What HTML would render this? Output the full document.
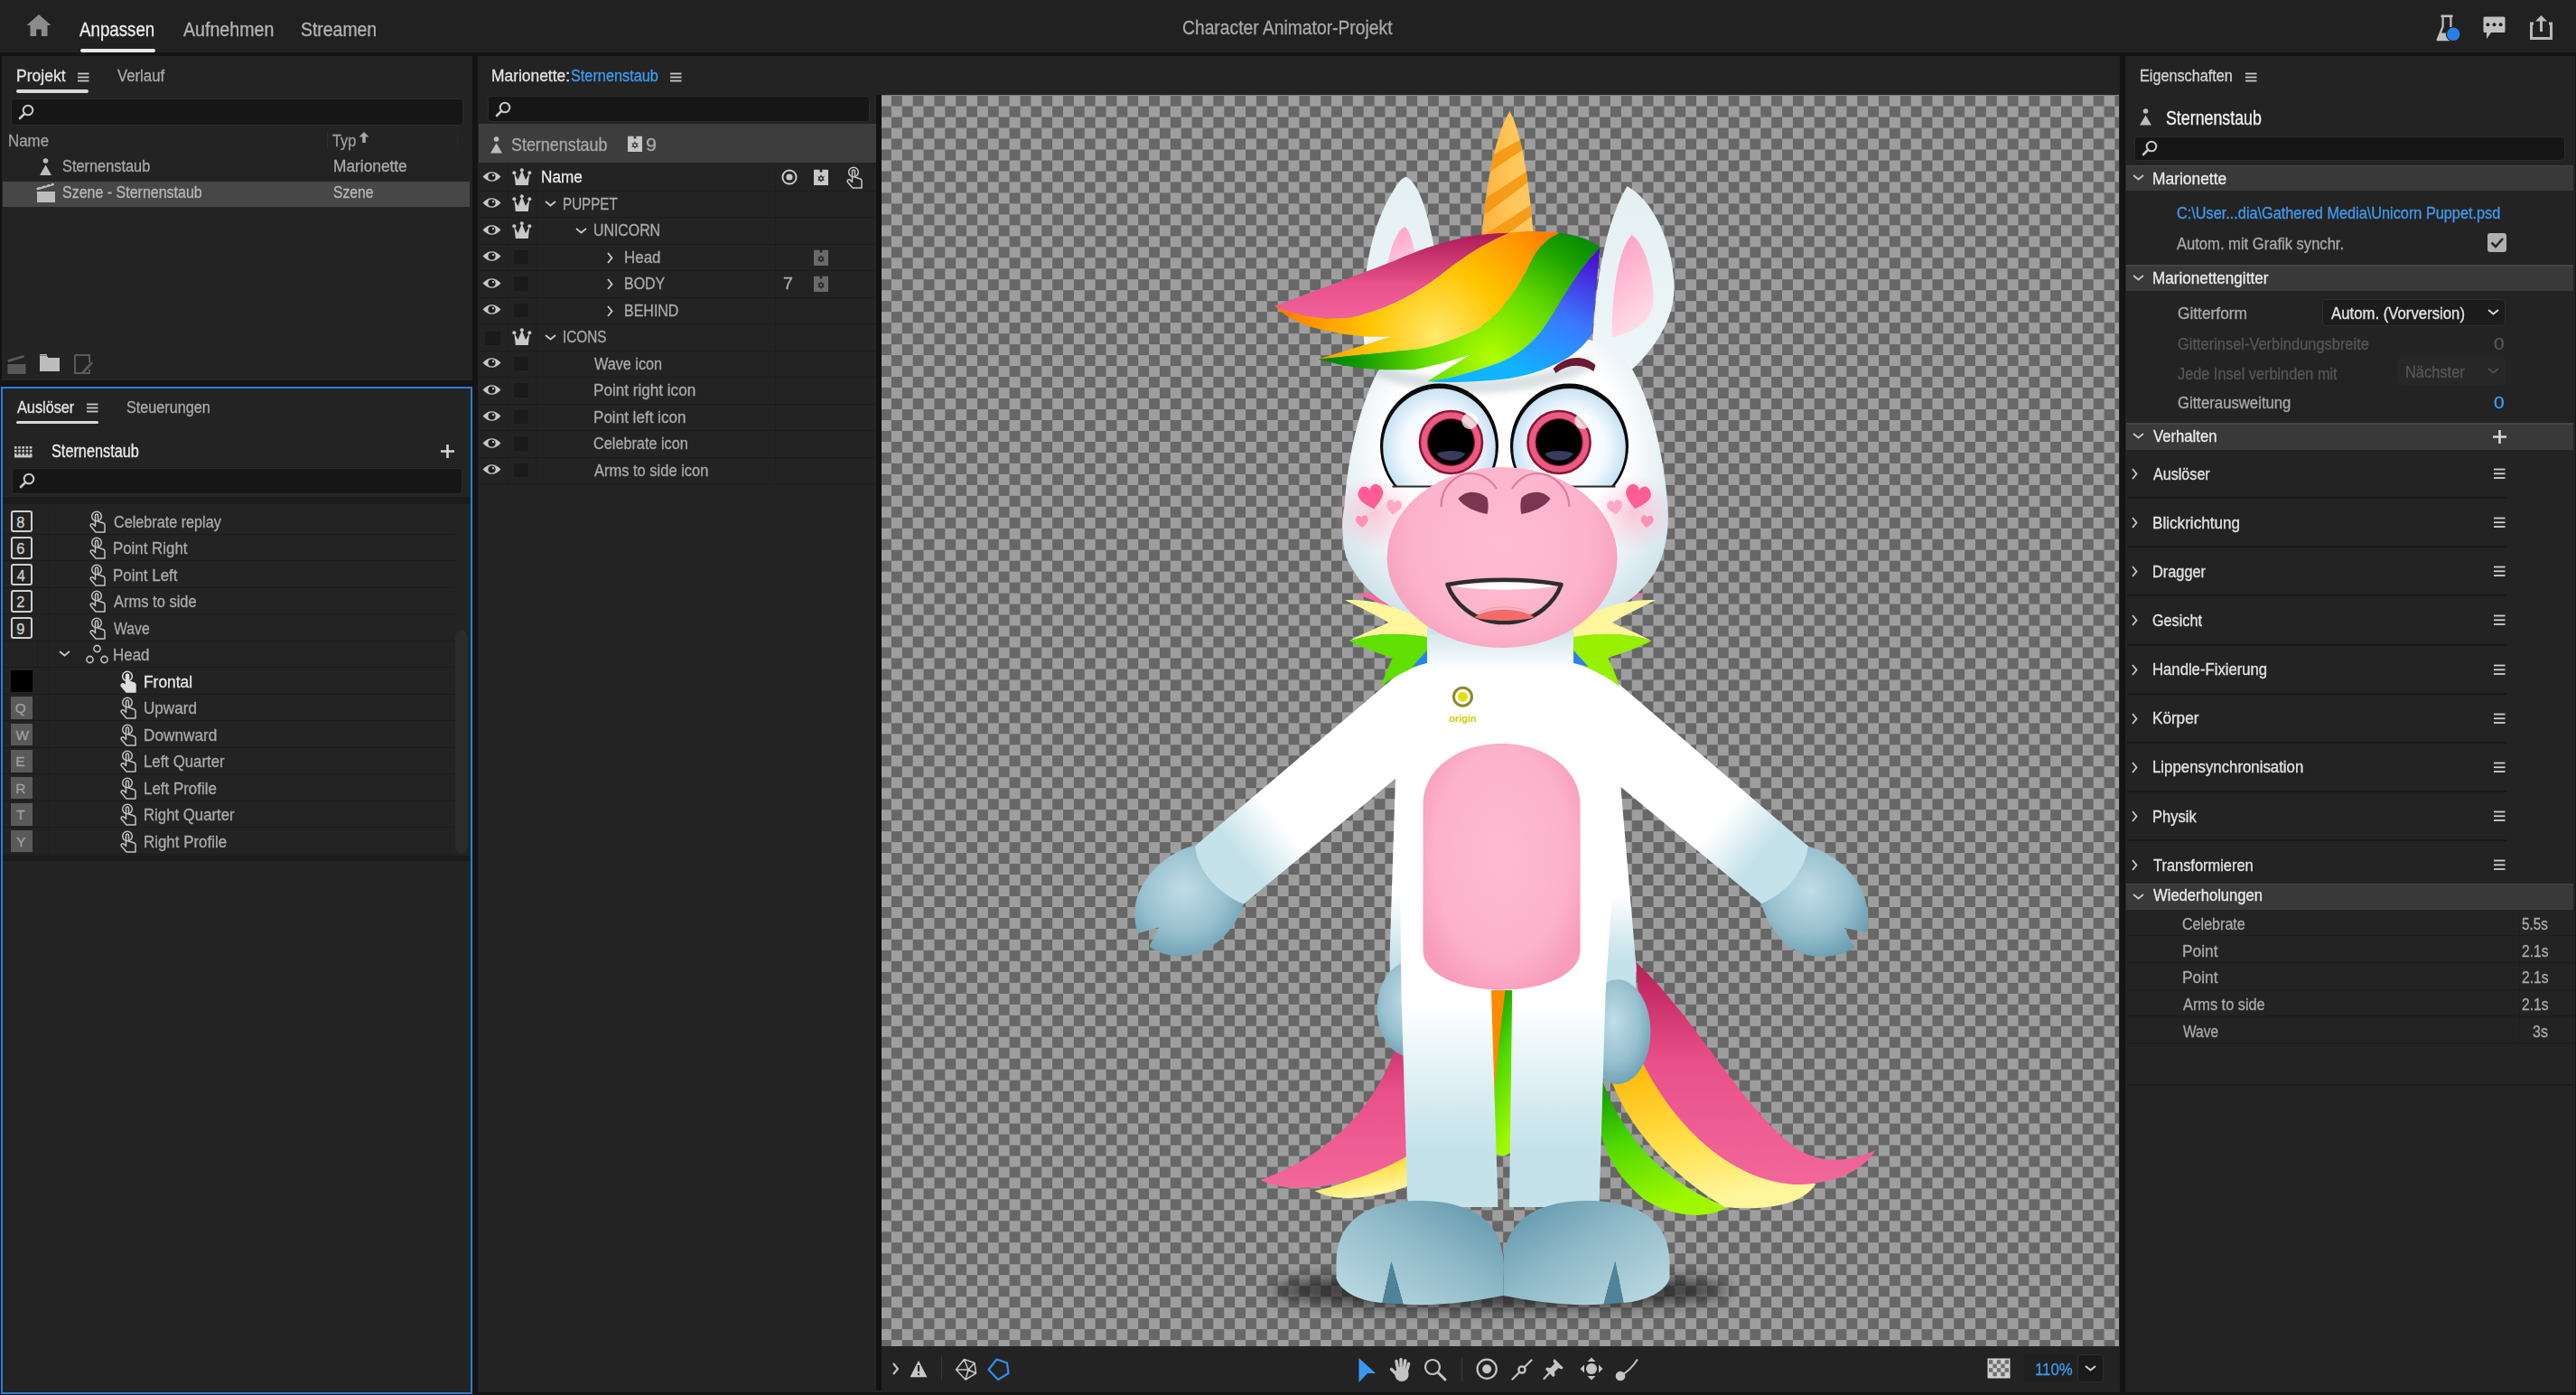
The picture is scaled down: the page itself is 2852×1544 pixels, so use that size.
<!DOCTYPE html><html><head><meta charset="utf-8"><style>html,body{margin:0;padding:0;width:2852px;height:1544px;overflow:hidden;background:#121212;}.t{position:absolute;white-space:nowrap;font-family:"Liberation Sans",sans-serif;transform-origin:0 0;-webkit-text-stroke:0.3px currentColor;}svg{overflow:visible}</style></head><body>
<div style="position:absolute;left:0.00px;top:0.00px;width:2852.00px;height:58.00px;background:#212121;"></div>
<svg style="position:absolute;left:29.00px;top:15.00px" width="28.00" height="26.00" viewBox="0 0 28 26"><path d="M14 1 L27.5 13 H23.5 V25 H16.8 V17.5 H11.2 V25 H4.5 V13 H0.5 Z" fill="#8c8c8c"/></svg>
<div class="t" style="left:87.96px;top:22.14px;font-size:21.80px;line-height:21.80px;color:#ececec;transform:scaleX(0.8585)">Anpassen</div>
<div style="position:absolute;left:89.00px;top:54.00px;width:83.00px;height:3.50px;background:#e8e8e8;border-radius:2px;"></div>
<div class="t" style="left:202.96px;top:22.14px;font-size:21.80px;line-height:21.80px;color:#b3b3b3;transform:scaleX(0.8996)">Aufnehmen</div>
<div class="t" style="left:333.12px;top:22.14px;font-size:21.80px;line-height:21.80px;color:#b3b3b3;transform:scaleX(0.8902)">Streamen</div>
<div class="t" style="left:1309.02px;top:20.20px;font-size:22.09px;line-height:22.09px;color:#a9a9a9;transform:scaleX(0.8732)">Character Animator-Projekt</div>
<svg style="position:absolute;left:2697.00px;top:16.00px" width="30.00" height="30.00" viewBox="0 0 30 30"><path d="M5.5 1.8 H18.5" stroke="#c0c0c0" stroke-width="2.6"/><path d="M7.6 2 V13.5 L1.6 28.2 H17 M16.4 2 V13.5 L18.5 19" fill="none" stroke="#c0c0c0" stroke-width="2.2" stroke-linejoin="round"/><path d="M4.6 20.5 H13.8 L15.5 28.5 H1.2 Z" fill="#c0c0c0"/><circle cx="19.2" cy="21.8" r="7.8" fill="#2680eb" stroke="#212121" stroke-width="1.2"/></svg>
<svg style="position:absolute;left:2749.00px;top:18.00px" width="26.00" height="28.00" viewBox="0 0 26 28"><path d="M2 0.5 H23 Q24.5 0.5 24.5 2 V16.5 Q24.5 18 23 18 H9 L4 25 V18 H2 Q0.5 18 0.5 16.5 V2 Q0.5 0.5 2 0.5 Z" fill="#c0c0c0"/><circle cx="5.4" cy="9.2" r="2" fill="#212121"/><circle cx="12.5" cy="9.2" r="2" fill="#212121"/><circle cx="19.6" cy="9.2" r="2" fill="#212121"/></svg>
<svg style="position:absolute;left:2801.00px;top:16.00px" width="26.00" height="28.00" viewBox="0 0 26 28"><path d="M4 10 H1.5 V26.5 H23.5 V10 H21" fill="none" stroke="#b8b8b8" stroke-width="3"/><path d="M12.5 19 V4" stroke="#b8b8b8" stroke-width="3"/><path d="M6 7.5 L12.5 1 L19 7.5 Z" fill="#b8b8b8"/></svg>
<div style="position:absolute;left:0.00px;top:58.00px;width:2852.00px;height:4.00px;background:#141414;"></div>
<div style="position:absolute;left:1.50px;top:62.00px;width:521.50px;height:359.00px;background:#232323;"></div>
<div class="t" style="left:17.56px;top:74.61px;font-size:18.90px;line-height:18.90px;color:#e4e4e4;transform:scaleX(0.9279)">Projekt</div>
<svg style="position:absolute;left:86.00px;top:79.50px" width="12.50" height="11.00" viewBox="0 0 12.5 11"><rect x="0" y="0.60" width="12.5" height="1.8" fill="#c8c8c8"/><rect x="0" y="4.60" width="12.5" height="1.8" fill="#c8c8c8"/><rect x="0" y="8.60" width="12.5" height="1.8" fill="#c8c8c8"/></svg>
<div style="position:absolute;left:18.00px;top:99.00px;width:80.00px;height:3.50px;background:#d8d8d8;border-radius:2px;"></div>
<div class="t" style="left:129.93px;top:74.61px;font-size:18.90px;line-height:18.90px;color:#ababab;transform:scaleX(0.8861)">Verlauf</div>
<div style="position:absolute;left:12.00px;top:109.00px;width:501.00px;height:30.00px;background:#161616;box-sizing:border-box;border:1px solid #2b2b2b;border-radius:4px;"></div>
<svg style="position:absolute;left:20.00px;top:115.00px" width="18.00" height="18.00" viewBox="0 0 18 18"><circle cx="11" cy="7" r="5.3" fill="none" stroke="#c8c8c8" stroke-width="2"/><path d="M7.2 10.8 L2 16" stroke="#c8c8c8" stroke-width="2.6" stroke-linecap="round"/></svg>
<div class="t" style="left:9.11px;top:146.60px;font-size:18.31px;line-height:18.31px;color:#a0a0a0;transform:scaleX(0.9240)">Name</div>
<div style="position:absolute;left:361.50px;top:145.00px;width:1.00px;height:20.00px;background:#2f2f2f;"></div>
<div style="position:absolute;left:506.00px;top:145.00px;width:1.00px;height:20.00px;background:#2a2a2a;"></div>
<div class="t" style="left:368.03px;top:146.60px;font-size:18.31px;line-height:18.31px;color:#a0a0a0;transform:scaleX(0.8927)">Typ</div>
<svg style="position:absolute;left:396.00px;top:145.00px" width="14.00" height="14.00" viewBox="0 0 14 14"><path d="M7 1 L12.5 6.5 H8.8 V13 H5.2 V6.5 H1.5 Z" fill="#a8a8a8"/></svg>
<svg style="position:absolute;left:44.00px;top:175.00px" width="13.00" height="19.00" viewBox="0 0 13 19"><circle cx="6.5" cy="3" r="2.8" fill="#bdbdbd"/><path d="M6.5 7.5 L13 19 L0 19 Z" fill="#bdbdbd"/></svg>
<div class="t" style="left:68.86px;top:174.85px;font-size:18.60px;line-height:18.60px;color:#ababab;transform:scaleX(0.8794)">Sternenstaub</div>
<div class="t" style="left:368.98px;top:174.85px;font-size:18.60px;line-height:18.60px;color:#ababab;transform:scaleX(0.9305)">Marionette</div>
<div style="position:absolute;left:3.00px;top:200.50px;width:517.00px;height:28.00px;background:#474747;"></div>
<svg style="position:absolute;left:40.00px;top:201.00px" width="22.00" height="24.00" viewBox="0 0 22 24"><path d="M1 11 H21 V23 H1 Z" fill="#bdbdbd"/><path d="M1 9.5 L20 4 L19.2 1.5 L0.3 7 Z" fill="#bdbdbd"/><path d="M5 6 L8 2.5 M10 4.6 L13 1.2 M15 3.2 L18 0" stroke="#474747" stroke-width="1.6"/></svg>
<div class="t" style="left:68.87px;top:203.85px;font-size:18.60px;line-height:18.60px;color:#b8b8b8;transform:scaleX(0.8602)">Szene - Sternenstaub</div>
<div class="t" style="left:369.29px;top:203.85px;font-size:18.60px;line-height:18.60px;color:#b8b8b8;transform:scaleX(0.8418)">Szene</div>
<svg style="position:absolute;left:8.00px;top:391.00px" width="21.00" height="23.00" viewBox="0 0 21 23"><path d="M0.5 12 H20.5 V23 H0.5 Z" fill="#585858"/><path d="M1 10 L19 4.5 L18.2 2 L0.3 7.3 Z" fill="#585858"/></svg>
<svg style="position:absolute;left:44.00px;top:392.00px" width="22.00" height="20.00" viewBox="0 0 22 20"><path d="M0 2 H8 L9.5 4 H22 V19 H0 Z" fill="#bcbcbc"/><path d="M0 0 H8 V1.5 H0 Z" fill="#bcbcbc"/></svg>
<svg style="position:absolute;left:82.00px;top:392.00px" width="21.00" height="22.00" viewBox="0 0 21 22"><path d="M1 1 H17 V9 M17 17 V21 H1 V1" fill="none" stroke="#5a5a5a" stroke-width="2"/><path d="M9 19 L19 8 L21 10 L11 21 L8 22 Z" fill="#5a5a5a"/></svg>
<div style="position:absolute;left:0.00px;top:421.00px;width:528.00px;height:7.00px;background:#141414;"></div>
<div style="position:absolute;left:1.00px;top:428.00px;width:522.00px;height:1114.50px;background:#232323;box-sizing:border-box;border:2px solid #2b7dd8;"></div>
<div class="t" style="left:18.97px;top:441.61px;font-size:18.90px;line-height:18.90px;color:#e4e4e4;transform:scaleX(0.8611)">Auslöser</div>
<svg style="position:absolute;left:96.00px;top:446.00px" width="12.50" height="11.00" viewBox="0 0 12.5 11"><rect x="0" y="0.60" width="12.5" height="1.8" fill="#c8c8c8"/><rect x="0" y="4.60" width="12.5" height="1.8" fill="#c8c8c8"/><rect x="0" y="8.60" width="12.5" height="1.8" fill="#c8c8c8"/></svg>
<div style="position:absolute;left:18.00px;top:465.50px;width:91.00px;height:3.50px;background:#d8d8d8;border-radius:2px;"></div>
<div class="t" style="left:140.26px;top:441.61px;font-size:18.90px;line-height:18.90px;color:#ababab;transform:scaleX(0.8574)">Steuerungen</div>
<svg style="position:absolute;left:14.50px;top:493.00px" width="22.00" height="14.00" viewBox="0 0 22 14"><rect x="1.0" y="1.0" width="2.6" height="2.6" fill="#c8c8c8"/><rect x="1.0" y="4.9" width="2.6" height="2.6" fill="#c8c8c8"/><rect x="1.0" y="8.8" width="2.6" height="2.6" fill="#c8c8c8"/><rect x="5.2" y="1.0" width="2.6" height="2.6" fill="#c8c8c8"/><rect x="5.2" y="4.9" width="2.6" height="2.6" fill="#c8c8c8"/><rect x="5.2" y="8.8" width="2.6" height="2.6" fill="#c8c8c8"/><rect x="9.4" y="1.0" width="2.6" height="2.6" fill="#c8c8c8"/><rect x="9.4" y="4.9" width="2.6" height="2.6" fill="#c8c8c8"/><rect x="9.4" y="8.8" width="2.6" height="2.6" fill="#c8c8c8"/><rect x="13.6" y="1.0" width="2.6" height="2.6" fill="#c8c8c8"/><rect x="13.6" y="4.9" width="2.6" height="2.6" fill="#c8c8c8"/><rect x="13.6" y="8.8" width="2.6" height="2.6" fill="#c8c8c8"/><rect x="17.8" y="1.0" width="2.6" height="2.6" fill="#c8c8c8"/><rect x="17.8" y="4.9" width="2.6" height="2.6" fill="#c8c8c8"/><rect x="17.8" y="8.8" width="2.6" height="2.6" fill="#c8c8c8"/><rect x="1" y="10.8" width="19.5" height="2.6" fill="#c8c8c8"/></svg>
<div class="t" style="left:56.76px;top:489.37px;font-size:20.35px;line-height:20.35px;color:#ececec;transform:scaleX(0.8007)">Sternenstaub</div>
<svg style="position:absolute;left:487.50px;top:492.00px" width="15.00" height="15.00" viewBox="0 0 15 15"><path d="M7.5 0 V15 M0 7.5 H15" stroke="#d4d4d4" stroke-width="2.6"/></svg>
<div style="position:absolute;left:13.00px;top:518.00px;width:499.00px;height:28.50px;background:#161616;box-sizing:border-box;border:1px solid #2b2b2b;border-radius:4px;"></div>
<svg style="position:absolute;left:21.00px;top:523.25px" width="18.00" height="18.00" viewBox="0 0 18 18"><circle cx="11" cy="7" r="5.3" fill="none" stroke="#c8c8c8" stroke-width="2"/><path d="M7.2 10.8 L2 16" stroke="#c8c8c8" stroke-width="2.6" stroke-linecap="round"/></svg>
<div style="position:absolute;left:3.00px;top:550.00px;width:518.00px;height:8.00px;background:#1b1b1b;"></div>
<div style="position:absolute;left:3.00px;top:590.50px;width:500.00px;height:1.00px;background:#1c1c1c;"></div>
<div style="position:absolute;left:53.00px;top:562.00px;width:1.00px;height:28.50px;background:#1f1f1f;"></div>
<div style="position:absolute;left:11.70px;top:564.50px;width:24.30px;height:24.50px;background:transparent;box-sizing:border-box;border:2px solid #cfcfcf;border-radius:3px;"></div>
<div class="t" style="left:18.29px;top:569.62px;font-size:16.28px;line-height:16.28px;color:#cfcfcf;transform:scaleX(1.0000)">8</div>
<svg style="position:absolute;left:97.50px;top:564.50px" width="20.00" height="26.00" viewBox="0 0 20 26"><circle cx="9" cy="6.5" r="5.3" fill="none" stroke="#c4c4c4" stroke-width="1.5"/><path d="M7.5 6 Q7.5 4 9 4 Q10.5 4 10.5 6 V12 L16.5 14 Q18 14.6 18 16 V24 H8 L2.5 17.5 Q1.5 16 3 15 Q4.3 14.3 5.5 15.5 L7.5 17.5 Z" fill="none" stroke="#c4c4c4" stroke-width="1.5" stroke-linejoin="round"/></svg>
<div class="t" style="left:125.58px;top:568.62px;font-size:18.17px;line-height:18.17px;color:#ababab;transform:scaleX(0.8916)">Celebrate replay</div>
<div style="position:absolute;left:3.00px;top:620.00px;width:500.00px;height:1.00px;background:#1c1c1c;"></div>
<div style="position:absolute;left:53.00px;top:591.50px;width:1.00px;height:28.50px;background:#1f1f1f;"></div>
<div style="position:absolute;left:11.70px;top:594.00px;width:24.30px;height:24.50px;background:transparent;box-sizing:border-box;border:2px solid #cfcfcf;border-radius:3px;"></div>
<div class="t" style="left:18.17px;top:599.12px;font-size:16.28px;line-height:16.28px;color:#cfcfcf;transform:scaleX(1.0000)">6</div>
<svg style="position:absolute;left:97.50px;top:594.00px" width="20.00" height="26.00" viewBox="0 0 20 26"><circle cx="9" cy="6.5" r="5.3" fill="none" stroke="#c4c4c4" stroke-width="1.5"/><path d="M7.5 6 Q7.5 4 9 4 Q10.5 4 10.5 6 V12 L16.5 14 Q18 14.6 18 16 V24 H8 L2.5 17.5 Q1.5 16 3 15 Q4.3 14.3 5.5 15.5 L7.5 17.5 Z" fill="none" stroke="#c4c4c4" stroke-width="1.5" stroke-linejoin="round"/></svg>
<div class="t" style="left:125.02px;top:598.12px;font-size:18.17px;line-height:18.17px;color:#ababab;transform:scaleX(0.9284)">Point Right</div>
<div style="position:absolute;left:3.00px;top:649.50px;width:500.00px;height:1.00px;background:#1c1c1c;"></div>
<div style="position:absolute;left:53.00px;top:621.00px;width:1.00px;height:28.50px;background:#1f1f1f;"></div>
<div style="position:absolute;left:11.70px;top:623.50px;width:24.30px;height:24.50px;background:transparent;box-sizing:border-box;border:2px solid #cfcfcf;border-radius:3px;"></div>
<div class="t" style="left:18.63px;top:628.62px;font-size:16.28px;line-height:16.28px;color:#cfcfcf;transform:scaleX(1.0000)">4</div>
<svg style="position:absolute;left:97.50px;top:623.50px" width="20.00" height="26.00" viewBox="0 0 20 26"><circle cx="9" cy="6.5" r="5.3" fill="none" stroke="#c4c4c4" stroke-width="1.5"/><path d="M7.5 6 Q7.5 4 9 4 Q10.5 4 10.5 6 V12 L16.5 14 Q18 14.6 18 16 V24 H8 L2.5 17.5 Q1.5 16 3 15 Q4.3 14.3 5.5 15.5 L7.5 17.5 Z" fill="none" stroke="#c4c4c4" stroke-width="1.5" stroke-linejoin="round"/></svg>
<div class="t" style="left:125.01px;top:627.62px;font-size:18.17px;line-height:18.17px;color:#ababab;transform:scaleX(0.9316)">Point Left</div>
<div style="position:absolute;left:3.00px;top:679.00px;width:500.00px;height:1.00px;background:#1c1c1c;"></div>
<div style="position:absolute;left:53.00px;top:650.50px;width:1.00px;height:28.50px;background:#1f1f1f;"></div>
<div style="position:absolute;left:11.70px;top:653.00px;width:24.30px;height:24.50px;background:transparent;box-sizing:border-box;border:2px solid #cfcfcf;border-radius:3px;"></div>
<div class="t" style="left:18.18px;top:658.12px;font-size:16.28px;line-height:16.28px;color:#cfcfcf;transform:scaleX(1.0000)">2</div>
<svg style="position:absolute;left:97.50px;top:653.00px" width="20.00" height="26.00" viewBox="0 0 20 26"><circle cx="9" cy="6.5" r="5.3" fill="none" stroke="#c4c4c4" stroke-width="1.5"/><path d="M7.5 6 Q7.5 4 9 4 Q10.5 4 10.5 6 V12 L16.5 14 Q18 14.6 18 16 V24 H8 L2.5 17.5 Q1.5 16 3 15 Q4.3 14.3 5.5 15.5 L7.5 17.5 Z" fill="none" stroke="#c4c4c4" stroke-width="1.5" stroke-linejoin="round"/></svg>
<div class="t" style="left:126.37px;top:657.12px;font-size:18.17px;line-height:18.17px;color:#ababab;transform:scaleX(0.9089)">Arms to side</div>
<div style="position:absolute;left:3.00px;top:708.50px;width:500.00px;height:1.00px;background:#1c1c1c;"></div>
<div style="position:absolute;left:53.00px;top:680.00px;width:1.00px;height:28.50px;background:#1f1f1f;"></div>
<div style="position:absolute;left:11.70px;top:682.50px;width:24.30px;height:24.50px;background:transparent;box-sizing:border-box;border:2px solid #cfcfcf;border-radius:3px;"></div>
<div class="t" style="left:18.24px;top:687.62px;font-size:16.28px;line-height:16.28px;color:#cfcfcf;transform:scaleX(1.0000)">9</div>
<svg style="position:absolute;left:97.50px;top:682.50px" width="20.00" height="26.00" viewBox="0 0 20 26"><circle cx="9" cy="6.5" r="5.3" fill="none" stroke="#c4c4c4" stroke-width="1.5"/><path d="M7.5 6 Q7.5 4 9 4 Q10.5 4 10.5 6 V12 L16.5 14 Q18 14.6 18 16 V24 H8 L2.5 17.5 Q1.5 16 3 15 Q4.3 14.3 5.5 15.5 L7.5 17.5 Z" fill="none" stroke="#c4c4c4" stroke-width="1.5" stroke-linejoin="round"/></svg>
<div class="t" style="left:126.33px;top:686.62px;font-size:18.17px;line-height:18.17px;color:#ababab;transform:scaleX(0.8671)">Wave</div>
<div style="position:absolute;left:3.00px;top:738.00px;width:500.00px;height:1.00px;background:#1c1c1c;"></div>
<div style="position:absolute;left:53.00px;top:709.50px;width:1.00px;height:28.50px;background:#1f1f1f;"></div>
<div style="position:absolute;left:41.00px;top:709.50px;width:1.00px;height:28.50px;background:#1f1f1f;"></div>
<svg style="position:absolute;left:63.50px;top:719.25px" width="15.00" height="9.50" viewBox="0 0 15.0 9.5"><path d="M2 2 L7.5 6.5 L13.0 2" fill="none" stroke="#c8c8c8" stroke-width="1.8"/></svg>
<svg style="position:absolute;left:95.00px;top:712.50px" width="25.00" height="23.00" viewBox="0 0 25 23"><circle cx="12.5" cy="5" r="3.6" fill="none" stroke="#c0c0c0" stroke-width="1.6"/><circle cx="4.5" cy="17" r="3.6" fill="none" stroke="#c0c0c0" stroke-width="1.6"/><circle cx="20.5" cy="17" r="3.6" fill="none" stroke="#c0c0c0" stroke-width="1.6"/></svg>
<div class="t" style="left:125.01px;top:716.12px;font-size:18.17px;line-height:18.17px;color:#ababab;transform:scaleX(0.9320)">Head</div>
<div style="position:absolute;left:3.00px;top:767.50px;width:500.00px;height:1.00px;background:#1c1c1c;"></div>
<div style="position:absolute;left:53.00px;top:739.00px;width:1.00px;height:28.50px;background:#1f1f1f;"></div>
<div style="position:absolute;left:11.70px;top:741.50px;width:24.30px;height:24.50px;background:#000000;"></div>
<svg style="position:absolute;left:131.50px;top:741.50px" width="20.00" height="26.00" viewBox="0 0 20 26"><circle cx="9" cy="6.5" r="5.3" fill="none" stroke="#dcdcdc" stroke-width="1.5"/><path d="M7.5 6 Q7.5 4 9 4 Q10.5 4 10.5 6 V12 L16.5 14 Q18 14.6 18 16 V24 H8 L2.5 17.5 Q1.5 16 3 15 Q4.3 14.3 5.5 15.5 L7.5 17.5 Z" fill="#dcdcdc" stroke="#dcdcdc" stroke-width="1.5" stroke-linejoin="round"/></svg>
<div class="t" style="left:159.07px;top:745.62px;font-size:18.17px;line-height:18.17px;color:#e8e8e8;transform:scaleX(0.9565)">Frontal</div>
<div style="position:absolute;left:3.00px;top:797.00px;width:500.00px;height:1.00px;background:#1c1c1c;"></div>
<div style="position:absolute;left:53.00px;top:768.50px;width:1.00px;height:28.50px;background:#1f1f1f;"></div>
<div style="position:absolute;left:11.70px;top:771.00px;width:24.30px;height:24.50px;background:#5a5a5a;"></div>
<div class="t" style="left:16.78px;top:776.48px;font-size:15.26px;line-height:15.26px;color:#a0a0a0;transform:scaleX(1.0000)">Q</div>
<svg style="position:absolute;left:131.50px;top:771.00px" width="20.00" height="26.00" viewBox="0 0 20 26"><circle cx="9" cy="6.5" r="5.3" fill="none" stroke="#c4c4c4" stroke-width="1.5"/><path d="M7.5 6 Q7.5 4 9 4 Q10.5 4 10.5 6 V12 L16.5 14 Q18 14.6 18 16 V24 H8 L2.5 17.5 Q1.5 16 3 15 Q4.3 14.3 5.5 15.5 L7.5 17.5 Z" fill="none" stroke="#c4c4c4" stroke-width="1.5" stroke-linejoin="round"/></svg>
<div class="t" style="left:159.18px;top:775.12px;font-size:18.17px;line-height:18.17px;color:#ababab;transform:scaleX(0.9412)">Upward</div>
<div style="position:absolute;left:3.00px;top:826.50px;width:500.00px;height:1.00px;background:#1c1c1c;"></div>
<div style="position:absolute;left:53.00px;top:798.00px;width:1.00px;height:28.50px;background:#1f1f1f;"></div>
<div style="position:absolute;left:11.70px;top:800.50px;width:24.30px;height:24.50px;background:#5a5a5a;"></div>
<div class="t" style="left:17.43px;top:805.98px;font-size:15.26px;line-height:15.26px;color:#a0a0a0;transform:scaleX(1.0000)">W</div>
<svg style="position:absolute;left:131.50px;top:800.50px" width="20.00" height="26.00" viewBox="0 0 20 26"><circle cx="9" cy="6.5" r="5.3" fill="none" stroke="#c4c4c4" stroke-width="1.5"/><path d="M7.5 6 Q7.5 4 9 4 Q10.5 4 10.5 6 V12 L16.5 14 Q18 14.6 18 16 V24 H8 L2.5 17.5 Q1.5 16 3 15 Q4.3 14.3 5.5 15.5 L7.5 17.5 Z" fill="none" stroke="#c4c4c4" stroke-width="1.5" stroke-linejoin="round"/></svg>
<div class="t" style="left:159.09px;top:804.62px;font-size:18.17px;line-height:18.17px;color:#ababab;transform:scaleX(0.9475)">Downward</div>
<div style="position:absolute;left:3.00px;top:856.00px;width:500.00px;height:1.00px;background:#1c1c1c;"></div>
<div style="position:absolute;left:53.00px;top:827.50px;width:1.00px;height:28.50px;background:#1f1f1f;"></div>
<div style="position:absolute;left:11.70px;top:830.00px;width:24.30px;height:24.50px;background:#5a5a5a;"></div>
<div class="t" style="left:17.25px;top:835.48px;font-size:15.26px;line-height:15.26px;color:#a0a0a0;transform:scaleX(1.0000)">E</div>
<svg style="position:absolute;left:131.50px;top:830.00px" width="20.00" height="26.00" viewBox="0 0 20 26"><circle cx="9" cy="6.5" r="5.3" fill="none" stroke="#c4c4c4" stroke-width="1.5"/><path d="M7.5 6 Q7.5 4 9 4 Q10.5 4 10.5 6 V12 L16.5 14 Q18 14.6 18 16 V24 H8 L2.5 17.5 Q1.5 16 3 15 Q4.3 14.3 5.5 15.5 L7.5 17.5 Z" fill="none" stroke="#c4c4c4" stroke-width="1.5" stroke-linejoin="round"/></svg>
<div class="t" style="left:159.12px;top:834.12px;font-size:18.17px;line-height:18.17px;color:#ababab;transform:scaleX(0.9248)">Left Quarter</div>
<div style="position:absolute;left:3.00px;top:885.50px;width:500.00px;height:1.00px;background:#1c1c1c;"></div>
<div style="position:absolute;left:53.00px;top:857.00px;width:1.00px;height:28.50px;background:#1f1f1f;"></div>
<div style="position:absolute;left:11.70px;top:859.50px;width:24.30px;height:24.50px;background:#5a5a5a;"></div>
<div class="t" style="left:17.25px;top:864.98px;font-size:15.26px;line-height:15.26px;color:#a0a0a0;transform:scaleX(1.0000)">R</div>
<svg style="position:absolute;left:131.50px;top:859.50px" width="20.00" height="26.00" viewBox="0 0 20 26"><circle cx="9" cy="6.5" r="5.3" fill="none" stroke="#c4c4c4" stroke-width="1.5"/><path d="M7.5 6 Q7.5 4 9 4 Q10.5 4 10.5 6 V12 L16.5 14 Q18 14.6 18 16 V24 H8 L2.5 17.5 Q1.5 16 3 15 Q4.3 14.3 5.5 15.5 L7.5 17.5 Z" fill="none" stroke="#c4c4c4" stroke-width="1.5" stroke-linejoin="round"/></svg>
<div class="t" style="left:159.11px;top:863.62px;font-size:18.17px;line-height:18.17px;color:#ababab;transform:scaleX(0.9320)">Left Profile</div>
<div style="position:absolute;left:3.00px;top:915.00px;width:500.00px;height:1.00px;background:#1c1c1c;"></div>
<div style="position:absolute;left:53.00px;top:886.50px;width:1.00px;height:28.50px;background:#1f1f1f;"></div>
<div style="position:absolute;left:11.70px;top:889.00px;width:24.30px;height:24.50px;background:#5a5a5a;"></div>
<div class="t" style="left:18.16px;top:894.48px;font-size:15.26px;line-height:15.26px;color:#a0a0a0;transform:scaleX(1.0000)">T</div>
<svg style="position:absolute;left:131.50px;top:889.00px" width="20.00" height="26.00" viewBox="0 0 20 26"><circle cx="9" cy="6.5" r="5.3" fill="none" stroke="#c4c4c4" stroke-width="1.5"/><path d="M7.5 6 Q7.5 4 9 4 Q10.5 4 10.5 6 V12 L16.5 14 Q18 14.6 18 16 V24 H8 L2.5 17.5 Q1.5 16 3 15 Q4.3 14.3 5.5 15.5 L7.5 17.5 Z" fill="none" stroke="#c4c4c4" stroke-width="1.5" stroke-linejoin="round"/></svg>
<div class="t" style="left:159.12px;top:893.12px;font-size:18.17px;line-height:18.17px;color:#ababab;transform:scaleX(0.9230)">Right Quarter</div>
<div style="position:absolute;left:3.00px;top:944.50px;width:500.00px;height:1.00px;background:#1c1c1c;"></div>
<div style="position:absolute;left:53.00px;top:916.00px;width:1.00px;height:28.50px;background:#1f1f1f;"></div>
<div style="position:absolute;left:11.70px;top:918.50px;width:24.30px;height:24.50px;background:#5a5a5a;"></div>
<div class="t" style="left:18.16px;top:923.98px;font-size:15.26px;line-height:15.26px;color:#a0a0a0;transform:scaleX(1.0000)">Y</div>
<svg style="position:absolute;left:131.50px;top:918.50px" width="20.00" height="26.00" viewBox="0 0 20 26"><circle cx="9" cy="6.5" r="5.3" fill="none" stroke="#c4c4c4" stroke-width="1.5"/><path d="M7.5 6 Q7.5 4 9 4 Q10.5 4 10.5 6 V12 L16.5 14 Q18 14.6 18 16 V24 H8 L2.5 17.5 Q1.5 16 3 15 Q4.3 14.3 5.5 15.5 L7.5 17.5 Z" fill="none" stroke="#c4c4c4" stroke-width="1.5" stroke-linejoin="round"/></svg>
<div class="t" style="left:159.11px;top:922.62px;font-size:18.17px;line-height:18.17px;color:#ababab;transform:scaleX(0.9311)">Right Profile</div>
<div style="position:absolute;left:504.00px;top:698.00px;width:14.00px;height:246.00px;background:#2b2b2b;border-radius:7px;"></div>
<div style="position:absolute;left:3.00px;top:947.00px;width:518.00px;height:6.00px;background:#1b1b1b;"></div>
<div style="position:absolute;left:523.00px;top:62.00px;width:6.00px;height:1482.00px;background:#141414;"></div>
<div style="position:absolute;left:529.00px;top:62.00px;width:1818.00px;height:1479.00px;background:#232323;"></div>
<div class="t" style="left:543.57px;top:74.91px;font-size:18.90px;line-height:18.90px;color:#e4e4e4;transform:scaleX(0.9206)">Marionette:</div>
<div class="t" style="left:631.86px;top:74.91px;font-size:18.90px;line-height:18.90px;color:#3f9cf2;transform:scaleX(0.8614)">Sternenstaub</div>
<svg style="position:absolute;left:742.00px;top:79.50px" width="12.50" height="11.00" viewBox="0 0 12.5 11"><rect x="0" y="0.60" width="12.5" height="1.8" fill="#c8c8c8"/><rect x="0" y="4.60" width="12.5" height="1.8" fill="#c8c8c8"/><rect x="0" y="8.60" width="12.5" height="1.8" fill="#c8c8c8"/></svg>
<div style="position:absolute;left:540.00px;top:106.00px;width:423.00px;height:29.40px;background:#161616;box-sizing:border-box;border:1px solid #2b2b2b;border-radius:4px;"></div>
<svg style="position:absolute;left:548.00px;top:111.70px" width="18.00" height="18.00" viewBox="0 0 18 18"><circle cx="11" cy="7" r="5.3" fill="none" stroke="#c8c8c8" stroke-width="2"/><path d="M7.2 10.8 L2 16" stroke="#c8c8c8" stroke-width="2.6" stroke-linecap="round"/></svg>
<div style="position:absolute;left:530.00px;top:137.00px;width:440.00px;height:43.00px;background:#3d3d3d;"></div>
<svg style="position:absolute;left:543.00px;top:150.50px" width="13.00" height="18.50" viewBox="0 0 13 18.5"><circle cx="6.5" cy="3" r="2.8" fill="#bdbdbd"/><path d="M6.5 7.5 L13 18.5 L0 18.5 Z" fill="#bdbdbd"/></svg>
<div class="t" style="left:566.19px;top:149.51px;font-size:20.78px;line-height:20.78px;color:#a8a8a8;transform:scaleX(0.8619)">Sternenstaub</div>
<svg style="position:absolute;left:693.50px;top:149.50px" width="18.00" height="19.00" viewBox="0 0 18 19"><path d="M1 0.8 H7.6 V3.5 H10.4 V0.8 H17 V18 H1 Z" fill="#c4c4c4"/><polygon points="9.00,6.20 10.21,8.50 12.81,8.40 11.42,10.60 12.81,12.80 10.21,12.70 9.00,15.00 7.79,12.70 5.19,12.80 6.58,10.60 5.19,8.40 7.79,8.50" fill="#3d3d3d"/><circle cx="9" cy="10.6" r="1.3" fill="#c4c4c4"/></svg>
<div class="t" style="left:714.99px;top:149.51px;font-size:20.78px;line-height:20.78px;color:#a8a8a8;transform:scaleX(1.0416)">9</div>
<div style="position:absolute;left:530.00px;top:210.50px;width:440.00px;height:1.00px;background:#1c1c1c;"></div>
<div style="position:absolute;left:562.00px;top:182.00px;width:1.00px;height:28.50px;background:#1e1e1e;"></div>
<div style="position:absolute;left:593.00px;top:182.00px;width:1.00px;height:28.50px;background:#1e1e1e;"></div>
<div style="position:absolute;left:858.00px;top:182.00px;width:1.00px;height:28.50px;background:#1e1e1e;"></div>
<svg style="position:absolute;left:533.80px;top:187.50px" width="21.00" height="15.00" viewBox="0 0 21 15"><path d="M0.5 7.5 Q10.5 -3 20.5 7.5 Q10.5 18 0.5 7.5 Z" fill="#c8c8c8"/><circle cx="10.5" cy="7.5" r="4.1" fill="#1e1e1e"/><circle cx="12" cy="6.2" r="1.1" fill="#c8c8c8"/></svg>
<svg style="position:absolute;left:566.50px;top:185.50px" width="22.00" height="21.00" viewBox="0 0 22 21"><path d="M2.3 5.5 L6.5 13 L10.8 2.5 L15 13 L19.3 5.5 L17.8 19 H3.8 Z" fill="#c8c8c8"/><circle cx="2.3" cy="5.2" r="2" fill="#c8c8c8"/><circle cx="10.8" cy="2.3" r="2" fill="#c8c8c8"/><circle cx="19.3" cy="5.2" r="2" fill="#c8c8c8"/></svg>
<div class="t" style="left:598.59px;top:187.01px;font-size:18.90px;line-height:18.90px;color:#ececec;transform:scaleX(0.9081)">Name</div>
<svg style="position:absolute;left:864.50px;top:186.50px" width="18.00" height="18.00" viewBox="0 0 18 18"><circle cx="9" cy="9" r="7.6" fill="none" stroke="#c8c8c8" stroke-width="2"/><circle cx="9" cy="9" r="3.6" fill="#c8c8c8"/></svg>
<svg style="position:absolute;left:900.00px;top:187.00px" width="18.00" height="19.00" viewBox="0 0 18 19"><path d="M1 0.8 H7.6 V3.5 H10.4 V0.8 H17 V18 H1 Z" fill="#c8c8c8"/><polygon points="9.00,6.20 10.21,8.50 12.81,8.40 11.42,10.60 12.81,12.80 10.21,12.70 9.00,15.00 7.79,12.70 5.19,12.80 6.58,10.60 5.19,8.40 7.79,8.50" fill="#232323"/><circle cx="9" cy="10.6" r="1.3" fill="#c8c8c8"/></svg>
<svg style="position:absolute;left:936.00px;top:184.00px" width="20.00" height="26.00" viewBox="0 0 20 26"><circle cx="9" cy="6.5" r="5.3" fill="none" stroke="#c8c8c8" stroke-width="1.5"/><path d="M7.5 6 Q7.5 4 9 4 Q10.5 4 10.5 6 V12 L16.5 14 Q18 14.6 18 16 V24 H8 L2.5 17.5 Q1.5 16 3 15 Q4.3 14.3 5.5 15.5 L7.5 17.5 Z" fill="none" stroke="#c8c8c8" stroke-width="1.5" stroke-linejoin="round"/></svg>
<div style="position:absolute;left:530.00px;top:240.00px;width:440.00px;height:1.00px;background:#1c1c1c;"></div>
<div style="position:absolute;left:562.00px;top:211.50px;width:1.00px;height:28.50px;background:#1e1e1e;"></div>
<div style="position:absolute;left:593.00px;top:211.50px;width:1.00px;height:28.50px;background:#1e1e1e;"></div>
<div style="position:absolute;left:858.00px;top:211.50px;width:1.00px;height:28.50px;background:#1e1e1e;"></div>
<svg style="position:absolute;left:533.80px;top:217.00px" width="21.00" height="15.00" viewBox="0 0 21 15"><path d="M0.5 7.5 Q10.5 -3 20.5 7.5 Q10.5 18 0.5 7.5 Z" fill="#c8c8c8"/><circle cx="10.5" cy="7.5" r="4.1" fill="#1e1e1e"/><circle cx="12" cy="6.2" r="1.1" fill="#c8c8c8"/></svg>
<svg style="position:absolute;left:566.50px;top:215.00px" width="22.00" height="21.00" viewBox="0 0 22 21"><path d="M2.3 5.5 L6.5 13 L10.8 2.5 L15 13 L19.3 5.5 L17.8 19 H3.8 Z" fill="#c8c8c8"/><circle cx="2.3" cy="5.2" r="2" fill="#c8c8c8"/><circle cx="10.8" cy="2.3" r="2" fill="#c8c8c8"/><circle cx="19.3" cy="5.2" r="2" fill="#c8c8c8"/></svg>
<svg style="position:absolute;left:602.20px;top:221.25px" width="15.00" height="9.50" viewBox="0 0 15.0 9.5"><path d="M2 2 L7.5 6.5 L13.0 2" fill="none" stroke="#c8c8c8" stroke-width="1.8"/></svg>
<div class="t" style="left:622.95px;top:216.90px;font-size:18.31px;line-height:18.31px;color:#ababab;transform:scaleX(0.8297)">PUPPET</div>
<div style="position:absolute;left:530.00px;top:269.50px;width:440.00px;height:1.00px;background:#1c1c1c;"></div>
<div style="position:absolute;left:562.00px;top:241.00px;width:1.00px;height:28.50px;background:#1e1e1e;"></div>
<div style="position:absolute;left:593.00px;top:241.00px;width:1.00px;height:28.50px;background:#1e1e1e;"></div>
<div style="position:absolute;left:858.00px;top:241.00px;width:1.00px;height:28.50px;background:#1e1e1e;"></div>
<svg style="position:absolute;left:533.80px;top:246.50px" width="21.00" height="15.00" viewBox="0 0 21 15"><path d="M0.5 7.5 Q10.5 -3 20.5 7.5 Q10.5 18 0.5 7.5 Z" fill="#c8c8c8"/><circle cx="10.5" cy="7.5" r="4.1" fill="#1e1e1e"/><circle cx="12" cy="6.2" r="1.1" fill="#c8c8c8"/></svg>
<svg style="position:absolute;left:566.50px;top:244.50px" width="22.00" height="21.00" viewBox="0 0 22 21"><path d="M2.3 5.5 L6.5 13 L10.8 2.5 L15 13 L19.3 5.5 L17.8 19 H3.8 Z" fill="#c8c8c8"/><circle cx="2.3" cy="5.2" r="2" fill="#c8c8c8"/><circle cx="10.8" cy="2.3" r="2" fill="#c8c8c8"/><circle cx="19.3" cy="5.2" r="2" fill="#c8c8c8"/></svg>
<svg style="position:absolute;left:636.00px;top:250.75px" width="15.00" height="9.50" viewBox="0 0 15.0 9.5"><path d="M2 2 L7.5 6.5 L13.0 2" fill="none" stroke="#c8c8c8" stroke-width="1.8"/></svg>
<div class="t" style="left:656.77px;top:246.40px;font-size:18.31px;line-height:18.31px;color:#ababab;transform:scaleX(0.8673)">UNICORN</div>
<div style="position:absolute;left:530.00px;top:299.00px;width:440.00px;height:1.00px;background:#1c1c1c;"></div>
<div style="position:absolute;left:562.00px;top:270.50px;width:1.00px;height:28.50px;background:#1e1e1e;"></div>
<div style="position:absolute;left:593.00px;top:270.50px;width:1.00px;height:28.50px;background:#1e1e1e;"></div>
<div style="position:absolute;left:858.00px;top:270.50px;width:1.00px;height:28.50px;background:#1e1e1e;"></div>
<svg style="position:absolute;left:533.80px;top:276.00px" width="21.00" height="15.00" viewBox="0 0 21 15"><path d="M0.5 7.5 Q10.5 -3 20.5 7.5 Q10.5 18 0.5 7.5 Z" fill="#c8c8c8"/><circle cx="10.5" cy="7.5" r="4.1" fill="#1e1e1e"/><circle cx="12" cy="6.2" r="1.1" fill="#c8c8c8"/></svg>
<div style="position:absolute;left:569.00px;top:276.50px;width:15.50px;height:15.50px;background:#1a1a1a;"></div>
<svg style="position:absolute;left:671.25px;top:277.50px" width="9.50" height="15.00" viewBox="0 0 9.5 15.0"><path d="M2 2 L6.5 7.5 L2 13.0" fill="none" stroke="#c8c8c8" stroke-width="1.8"/></svg>
<div class="t" style="left:690.61px;top:275.90px;font-size:18.31px;line-height:18.31px;color:#ababab;transform:scaleX(0.9246)">Head</div>
<svg style="position:absolute;left:900.00px;top:275.50px" width="18.00" height="19.00" viewBox="0 0 18 19"><path d="M1 0.8 H7.6 V3.5 H10.4 V0.8 H17 V18 H1 Z" fill="#6a6a6a"/><polygon points="9.00,6.20 10.21,8.50 12.81,8.40 11.42,10.60 12.81,12.80 10.21,12.70 9.00,15.00 7.79,12.70 5.19,12.80 6.58,10.60 5.19,8.40 7.79,8.50" fill="#232323"/><circle cx="9" cy="10.6" r="1.3" fill="#6a6a6a"/></svg>
<div style="position:absolute;left:530.00px;top:328.50px;width:440.00px;height:1.00px;background:#1c1c1c;"></div>
<div style="position:absolute;left:562.00px;top:300.00px;width:1.00px;height:28.50px;background:#1e1e1e;"></div>
<div style="position:absolute;left:593.00px;top:300.00px;width:1.00px;height:28.50px;background:#1e1e1e;"></div>
<div style="position:absolute;left:858.00px;top:300.00px;width:1.00px;height:28.50px;background:#1e1e1e;"></div>
<svg style="position:absolute;left:533.80px;top:305.50px" width="21.00" height="15.00" viewBox="0 0 21 15"><path d="M0.5 7.5 Q10.5 -3 20.5 7.5 Q10.5 18 0.5 7.5 Z" fill="#c8c8c8"/><circle cx="10.5" cy="7.5" r="4.1" fill="#1e1e1e"/><circle cx="12" cy="6.2" r="1.1" fill="#c8c8c8"/></svg>
<div style="position:absolute;left:569.00px;top:306.00px;width:15.50px;height:15.50px;background:#1a1a1a;"></div>
<svg style="position:absolute;left:671.25px;top:307.00px" width="9.50" height="15.00" viewBox="0 0 9.5 15.0"><path d="M2 2 L6.5 7.5 L2 13.0" fill="none" stroke="#c8c8c8" stroke-width="1.8"/></svg>
<div class="t" style="left:690.69px;top:305.40px;font-size:18.31px;line-height:18.31px;color:#ababab;transform:scaleX(0.8721)">BODY</div>
<svg style="position:absolute;left:900.00px;top:305.00px" width="18.00" height="19.00" viewBox="0 0 18 19"><path d="M1 0.8 H7.6 V3.5 H10.4 V0.8 H17 V18 H1 Z" fill="#6a6a6a"/><polygon points="9.00,6.20 10.21,8.50 12.81,8.40 11.42,10.60 12.81,12.80 10.21,12.70 9.00,15.00 7.79,12.70 5.19,12.80 6.58,10.60 5.19,8.40 7.79,8.50" fill="#232323"/><circle cx="9" cy="10.6" r="1.3" fill="#6a6a6a"/></svg>
<div class="t" style="left:867.48px;top:305.40px;font-size:18.31px;line-height:18.31px;color:#ababab;transform:scaleX(1.0810)">7</div>
<div style="position:absolute;left:530.00px;top:358.00px;width:440.00px;height:1.00px;background:#1c1c1c;"></div>
<div style="position:absolute;left:562.00px;top:329.50px;width:1.00px;height:28.50px;background:#1e1e1e;"></div>
<div style="position:absolute;left:593.00px;top:329.50px;width:1.00px;height:28.50px;background:#1e1e1e;"></div>
<div style="position:absolute;left:858.00px;top:329.50px;width:1.00px;height:28.50px;background:#1e1e1e;"></div>
<svg style="position:absolute;left:533.80px;top:335.00px" width="21.00" height="15.00" viewBox="0 0 21 15"><path d="M0.5 7.5 Q10.5 -3 20.5 7.5 Q10.5 18 0.5 7.5 Z" fill="#c8c8c8"/><circle cx="10.5" cy="7.5" r="4.1" fill="#1e1e1e"/><circle cx="12" cy="6.2" r="1.1" fill="#c8c8c8"/></svg>
<div style="position:absolute;left:569.00px;top:335.50px;width:15.50px;height:15.50px;background:#1a1a1a;"></div>
<svg style="position:absolute;left:671.25px;top:336.50px" width="9.50" height="15.00" viewBox="0 0 9.5 15.0"><path d="M2 2 L6.5 7.5 L2 13.0" fill="none" stroke="#c8c8c8" stroke-width="1.8"/></svg>
<div class="t" style="left:690.69px;top:334.90px;font-size:18.31px;line-height:18.31px;color:#ababab;transform:scaleX(0.8740)">BEHIND</div>
<div style="position:absolute;left:530.00px;top:387.50px;width:440.00px;height:1.00px;background:#1c1c1c;"></div>
<div style="position:absolute;left:562.00px;top:359.00px;width:1.00px;height:28.50px;background:#1e1e1e;"></div>
<div style="position:absolute;left:593.00px;top:359.00px;width:1.00px;height:28.50px;background:#1e1e1e;"></div>
<div style="position:absolute;left:858.00px;top:359.00px;width:1.00px;height:28.50px;background:#1e1e1e;"></div>
<div style="position:absolute;left:537.00px;top:366.50px;width:16.50px;height:15.50px;background:#1a1a1a;"></div>
<svg style="position:absolute;left:566.50px;top:362.50px" width="22.00" height="21.00" viewBox="0 0 22 21"><path d="M2.3 5.5 L6.5 13 L10.8 2.5 L15 13 L19.3 5.5 L17.8 19 H3.8 Z" fill="#c8c8c8"/><circle cx="2.3" cy="5.2" r="2" fill="#c8c8c8"/><circle cx="10.8" cy="2.3" r="2" fill="#c8c8c8"/><circle cx="19.3" cy="5.2" r="2" fill="#c8c8c8"/></svg>
<svg style="position:absolute;left:602.20px;top:368.75px" width="15.00" height="9.50" viewBox="0 0 15.0 9.5"><path d="M2 2 L7.5 6.5 L13.0 2" fill="none" stroke="#c8c8c8" stroke-width="1.8"/></svg>
<div class="t" style="left:622.79px;top:364.40px;font-size:18.31px;line-height:18.31px;color:#ababab;transform:scaleX(0.8365)">ICONS</div>
<div style="position:absolute;left:530.00px;top:417.00px;width:440.00px;height:1.00px;background:#1c1c1c;"></div>
<div style="position:absolute;left:562.00px;top:388.50px;width:1.00px;height:28.50px;background:#1e1e1e;"></div>
<div style="position:absolute;left:593.00px;top:388.50px;width:1.00px;height:28.50px;background:#1e1e1e;"></div>
<div style="position:absolute;left:858.00px;top:388.50px;width:1.00px;height:28.50px;background:#1e1e1e;"></div>
<svg style="position:absolute;left:533.80px;top:394.00px" width="21.00" height="15.00" viewBox="0 0 21 15"><path d="M0.5 7.5 Q10.5 -3 20.5 7.5 Q10.5 18 0.5 7.5 Z" fill="#c8c8c8"/><circle cx="10.5" cy="7.5" r="4.1" fill="#1e1e1e"/><circle cx="12" cy="6.2" r="1.1" fill="#c8c8c8"/></svg>
<div style="position:absolute;left:569.00px;top:394.50px;width:15.50px;height:15.50px;background:#1a1a1a;"></div>
<div class="t" style="left:657.93px;top:393.90px;font-size:18.31px;line-height:18.31px;color:#ababab;transform:scaleX(0.8857)">Wave icon</div>
<div style="position:absolute;left:530.00px;top:446.50px;width:440.00px;height:1.00px;background:#1c1c1c;"></div>
<div style="position:absolute;left:562.00px;top:418.00px;width:1.00px;height:28.50px;background:#1e1e1e;"></div>
<div style="position:absolute;left:593.00px;top:418.00px;width:1.00px;height:28.50px;background:#1e1e1e;"></div>
<div style="position:absolute;left:858.00px;top:418.00px;width:1.00px;height:28.50px;background:#1e1e1e;"></div>
<svg style="position:absolute;left:533.80px;top:423.50px" width="21.00" height="15.00" viewBox="0 0 21 15"><path d="M0.5 7.5 Q10.5 -3 20.5 7.5 Q10.5 18 0.5 7.5 Z" fill="#c8c8c8"/><circle cx="10.5" cy="7.5" r="4.1" fill="#1e1e1e"/><circle cx="12" cy="6.2" r="1.1" fill="#c8c8c8"/></svg>
<div style="position:absolute;left:569.00px;top:424.00px;width:15.50px;height:15.50px;background:#1a1a1a;"></div>
<div class="t" style="left:656.59px;top:423.40px;font-size:18.31px;line-height:18.31px;color:#ababab;transform:scaleX(0.9354)">Point right icon</div>
<div style="position:absolute;left:530.00px;top:476.00px;width:440.00px;height:1.00px;background:#1c1c1c;"></div>
<div style="position:absolute;left:562.00px;top:447.50px;width:1.00px;height:28.50px;background:#1e1e1e;"></div>
<div style="position:absolute;left:593.00px;top:447.50px;width:1.00px;height:28.50px;background:#1e1e1e;"></div>
<div style="position:absolute;left:858.00px;top:447.50px;width:1.00px;height:28.50px;background:#1e1e1e;"></div>
<svg style="position:absolute;left:533.80px;top:453.00px" width="21.00" height="15.00" viewBox="0 0 21 15"><path d="M0.5 7.5 Q10.5 -3 20.5 7.5 Q10.5 18 0.5 7.5 Z" fill="#c8c8c8"/><circle cx="10.5" cy="7.5" r="4.1" fill="#1e1e1e"/><circle cx="12" cy="6.2" r="1.1" fill="#c8c8c8"/></svg>
<div style="position:absolute;left:569.00px;top:453.50px;width:15.50px;height:15.50px;background:#1a1a1a;"></div>
<div class="t" style="left:656.60px;top:452.90px;font-size:18.31px;line-height:18.31px;color:#ababab;transform:scaleX(0.9324)">Point left icon</div>
<div style="position:absolute;left:530.00px;top:505.50px;width:440.00px;height:1.00px;background:#1c1c1c;"></div>
<div style="position:absolute;left:562.00px;top:477.00px;width:1.00px;height:28.50px;background:#1e1e1e;"></div>
<div style="position:absolute;left:593.00px;top:477.00px;width:1.00px;height:28.50px;background:#1e1e1e;"></div>
<div style="position:absolute;left:858.00px;top:477.00px;width:1.00px;height:28.50px;background:#1e1e1e;"></div>
<svg style="position:absolute;left:533.80px;top:482.50px" width="21.00" height="15.00" viewBox="0 0 21 15"><path d="M0.5 7.5 Q10.5 -3 20.5 7.5 Q10.5 18 0.5 7.5 Z" fill="#c8c8c8"/><circle cx="10.5" cy="7.5" r="4.1" fill="#1e1e1e"/><circle cx="12" cy="6.2" r="1.1" fill="#c8c8c8"/></svg>
<div style="position:absolute;left:569.00px;top:483.00px;width:15.50px;height:15.50px;background:#1a1a1a;"></div>
<div class="t" style="left:657.17px;top:482.40px;font-size:18.31px;line-height:18.31px;color:#ababab;transform:scaleX(0.8881)">Celebrate icon</div>
<div style="position:absolute;left:530.00px;top:535.00px;width:440.00px;height:1.00px;background:#1c1c1c;"></div>
<div style="position:absolute;left:562.00px;top:506.50px;width:1.00px;height:28.50px;background:#1e1e1e;"></div>
<div style="position:absolute;left:593.00px;top:506.50px;width:1.00px;height:28.50px;background:#1e1e1e;"></div>
<div style="position:absolute;left:858.00px;top:506.50px;width:1.00px;height:28.50px;background:#1e1e1e;"></div>
<svg style="position:absolute;left:533.80px;top:512.00px" width="21.00" height="15.00" viewBox="0 0 21 15"><path d="M0.5 7.5 Q10.5 -3 20.5 7.5 Q10.5 18 0.5 7.5 Z" fill="#c8c8c8"/><circle cx="10.5" cy="7.5" r="4.1" fill="#1e1e1e"/><circle cx="12" cy="6.2" r="1.1" fill="#c8c8c8"/></svg>
<div style="position:absolute;left:569.00px;top:512.50px;width:15.50px;height:15.50px;background:#1a1a1a;"></div>
<div class="t" style="left:657.97px;top:511.90px;font-size:18.31px;line-height:18.31px;color:#ababab;transform:scaleX(0.9007)">Arms to side icon</div>
<div style="position:absolute;left:970.00px;top:105.00px;width:5.50px;height:1434.00px;background:#121212;"></div>
<svg style="position:absolute;left:975.5px;top:105px" width="1370.0" height="1385" viewBox="975.5 105 1370.0 1385"><defs><pattern id="chk" patternUnits="userSpaceOnUse" x="974.518" y="105.622" width="23.764" height="23.956"><rect width="23.764" height="23.956" fill="#9e9e9e"/><rect x="11.882" y="0" width="11.882" height="11.978" fill="#676767"/><rect x="0" y="11.978" width="11.882" height="11.978" fill="#676767"/></pattern></defs><rect x="975.5" y="105" width="1370.0" height="1385" fill="url(#chk)"/><defs><filter id="blur10" x="-50%" y="-50%" width="200%" height="200%"><feGaussianBlur stdDeviation="9"/></filter><filter id="blur3" x="-50%" y="-50%" width="200%" height="200%"><feGaussianBlur stdDeviation="3"/></filter><linearGradient id="gPinkT" x1="0" y1="0" x2="0" y2="1"><stop offset="0" stop-color="#b81f58"/><stop offset="0.45" stop-color="#e9508a"/><stop offset="1" stop-color="#f2679a"/></linearGradient><linearGradient id="gYelT" x1="0" y1="0" x2="0.3" y2="1"><stop offset="0" stop-color="#ffb400"/><stop offset="0.6" stop-color="#ffe04a"/><stop offset="1" stop-color="#fff59a"/></linearGradient><linearGradient id="gGrnT" x1="0" y1="0" x2="0.3" y2="1"><stop offset="0" stop-color="#008c00"/><stop offset="0.5" stop-color="#50d800"/><stop offset="1" stop-color="#a0f800"/></linearGradient><linearGradient id="gLegs" gradientUnits="userSpaceOnUse" x1="0" y1="1110" x2="0" y2="1270"><stop offset="0" stop-color="#ffffff"/><stop offset="1" stop-color="#c5e2ea"/></linearGradient><linearGradient id="gBack" gradientUnits="userSpaceOnUse" x1="0" y1="990" x2="0" y2="1060"><stop offset="0" stop-color="#ffffff"/><stop offset="1" stop-color="#c5e2ea"/></linearGradient><linearGradient id="gArmL" gradientUnits="userSpaceOnUse" x1="1412" y1="903" x2="1368" y2="940"><stop offset="0" stop-color="#ffffff"/><stop offset="1" stop-color="#c5e2ea"/></linearGradient><linearGradient id="gArmR" gradientUnits="userSpaceOnUse" x1="1908" y1="903" x2="1952" y2="940"><stop offset="0" stop-color="#ffffff"/><stop offset="1" stop-color="#c5e2ea"/></linearGradient><radialGradient id="gHoof" cx="0.45" cy="0.4" r="0.65"><stop offset="0" stop-color="#c0dde7"/><stop offset="0.6" stop-color="#98c0cf"/><stop offset="1" stop-color="#6a9db1"/></radialGradient><linearGradient id="gFootL" x1="0" y1="1" x2="1" y2="0"><stop offset="0" stop-color="#bfdde6"/><stop offset="0.55" stop-color="#8fb9c8"/><stop offset="0.85" stop-color="#6c9fb3"/><stop offset="1" stop-color="#a8cad6"/></linearGradient><linearGradient id="gFootR" x1="1" y1="1" x2="0" y2="0"><stop offset="0" stop-color="#bfdde6"/><stop offset="0.55" stop-color="#8fb9c8"/><stop offset="0.85" stop-color="#6c9fb3"/><stop offset="1" stop-color="#a8cad6"/></linearGradient><radialGradient id="gBelly" cx="0.5" cy="0.45" r="0.6"><stop offset="0" stop-color="#ffbad2"/><stop offset="0.7" stop-color="#fdb2cb"/><stop offset="1" stop-color="#f79cba"/></radialGradient><radialGradient id="gHead" gradientUnits="userSpaceOnUse" cx="1665" cy="500" r="215"><stop offset="0" stop-color="#ffffff"/><stop offset="0.62" stop-color="#ffffff"/><stop offset="1" stop-color="#cfe3ea"/></radialGradient><linearGradient id="gEar" x1="0" y1="0" x2="0" y2="1"><stop offset="0" stop-color="#e4f0f3"/><stop offset="1" stop-color="#eef6f8"/></linearGradient><linearGradient id="gInEar" x1="0" y1="0" x2="0.3" y2="1"><stop offset="0" stop-color="#ff9cbf"/><stop offset="1" stop-color="#ffdce8"/></linearGradient><linearGradient id="gHorn" x1="0" y1="0" x2="1" y2="0"><stop offset="0" stop-color="#ffb040"/><stop offset="0.6" stop-color="#ffc75a"/><stop offset="1" stop-color="#ffc860"/></linearGradient><linearGradient id="gMPink" gradientUnits="userSpaceOnUse" x1="0" y1="262" x2="0" y2="350"><stop offset="0" stop-color="#b01e5a"/><stop offset="0.6" stop-color="#e9528a"/><stop offset="1" stop-color="#f0609a"/></linearGradient><radialGradient id="gMOr" gradientUnits="userSpaceOnUse" cx="1590" cy="372" r="190"><stop offset="0" stop-color="#ffe96c"/><stop offset="0.4" stop-color="#ffc400"/><stop offset="0.75" stop-color="#ff9200"/><stop offset="1" stop-color="#ff6a00"/></radialGradient><radialGradient id="gMGr" gradientUnits="userSpaceOnUse" cx="1652" cy="398" r="175"><stop offset="0" stop-color="#b2ff00"/><stop offset="0.45" stop-color="#62da00"/><stop offset="0.8" stop-color="#1aa000"/><stop offset="1" stop-color="#008800"/></radialGradient><linearGradient id="gMBl" gradientUnits="userSpaceOnUse" x1="1765" y1="285" x2="1700" y2="420"><stop offset="0" stop-color="#4a0ed0"/><stop offset="0.5" stop-color="#3a78ff"/><stop offset="1" stop-color="#10b4ff"/></linearGradient><radialGradient id="gEyeW" cx="0.5" cy="0.5" r="0.5"><stop offset="0" stop-color="#ffffff"/><stop offset="0.65" stop-color="#f4faff"/><stop offset="1" stop-color="#c9e2f3"/></radialGradient><radialGradient id="gMuz" gradientUnits="userSpaceOnUse" cx="1662" cy="600" r="140"><stop offset="0" stop-color="#ffbdd3"/><stop offset="0.7" stop-color="#fdb3cb"/><stop offset="1" stop-color="#f59fbd"/></radialGradient><radialGradient id="gBlush" cx="0.5" cy="0.5" r="0.5"><stop offset="0" stop-color="#ffb0c8" stop-opacity="0.65"/><stop offset="1" stop-color="#ffb0c8" stop-opacity="0"/></radialGradient><linearGradient id="gNeck" x1="0" y1="0" x2="0" y2="1"><stop offset="0" stop-color="#c9e0e8"/><stop offset="0.55" stop-color="#e6f1f4"/><stop offset="1" stop-color="#ffffff"/></linearGradient><clipPath id="clipEye"><rect x="1500" y="400" width="330" height="139"/></clipPath><clipPath id="clipHorn"><path d="M1640,262 C1645,200 1655,150 1671,123 C1685,150 1692,200 1697,258 Z"/></clipPath></defs><ellipse cx="1660" cy="1428" rx="255" ry="20" fill="#1e1e1e" opacity="0.75" filter="url(#blur10)"/><path d="M1771,1188 C1790,1250 1840,1310 1912,1336 C1890,1350 1850,1348 1818,1326 C1790,1302 1772,1272 1770,1240 Z" fill="url(#gGrnT)"/><path d="M1778,1181 L1820,1176 C1850,1240 1920,1305 2010,1310 C1995,1335 1950,1340 1909,1336 C1850,1300 1800,1250 1778,1181 Z" fill="url(#gYelT)"/><path d="M1811,1065 C1880,1130 1930,1230 1990,1272 C2020,1290 2050,1285 2076,1273 C2060,1300 2020,1312 1985,1311 C1910,1305 1850,1240 1818,1176 Z" fill="url(#gPinkT)"/><path d="M1558,1262 C1520,1296 1490,1312 1455,1318 C1480,1332 1525,1326 1560,1312 Z" fill="url(#gYelT)"/><path d="M1556,1120 C1540,1200 1490,1272 1395,1306 C1430,1324 1500,1314 1560,1278 Z" fill="url(#gPinkT)"/><path d="M1545,845 L1793,860 L1811,1070 L1810,1160 L1540,1160 L1538,1060 Z" fill="url(#gBack)"/><ellipse cx="1562" cy="1117" rx="38" ry="53" fill="url(#gHoof)"/><ellipse cx="1790" cy="1142" rx="37" ry="58" fill="url(#gHoof)"/><path d="M1645,1090 L1668,1090 L1654,1210 Z" fill="#ff8a00"/><path d="M1667,1090 L1680,1090 L1676,1270 C1668,1284 1654,1282 1650,1266 C1654,1200 1660,1140 1667,1090 Z" fill="url(#gGrnT)"/><path d="M1585,676 C1560,662 1530,654 1500,657 C1520,664 1540,672 1552,684 Z" fill="#f06a9e"/><g transform="translate(3321.2,0) scale(-1,1)"><path d="M1585,676 C1560,662 1530,654 1500,657 C1520,664 1540,672 1552,684 Z" fill="#f06a9e"/></g><path d="M1575,723 L1310,947 L1345,1005 L1376.5,1000.6 L1549,858 Z" fill="url(#gArmL)"/><path d="M1322.6,935.8 C1300,940 1270,962 1259.5,990 C1254,1005 1255,1022 1259.5,1033 L1282.4,1026.4 L1272,1047.6 C1285,1058 1305,1060 1320,1057 C1345,1050 1366,1030 1376.5,1000.6 C1350,990 1325,965 1322.6,935.8 Z" fill="url(#gHoof)"/><path d="M1745,717 L2013,946.5 L1978,1005 L1949.6,999.9 L1792.2,869.6 Z" fill="url(#gArmR)"/><path d="M2001.2,936.7 C2023,941 2053,963 2063,990 C2068,1005 2068,1020 2067,1032 L2041.2,1027 L2052.8,1049 C2040,1058 2018,1061 2000,1057 C1978,1051 1958,1030 1949.6,999.9 C1975,990 1998,965 2001.2,936.7 Z" fill="url(#gHoof)"/><path d="M1579.5,690 L1741.7,690 L1741.7,733 C1755,733 1765,735 1773,740 L1800,766 L1792,870 L1777,1100 L1770,1336 L1670.5,1336 L1673.7,1096 L1650.5,1096 L1658,1336 L1558,1336 L1551,1100 L1548,858 L1545,760 L1563,738 C1568,735 1573,733 1579.5,733 Z" fill="url(#gLegs)"/><rect x="1579.5" y="690" width="162.2" height="52" fill="url(#gNeck)"/><path d="M1575,891 C1575,850 1615,823 1662,823 C1709,823 1749,850 1749,891 L1749,1052 C1749,1078 1710,1095.5 1662,1095.5 C1614,1095.5 1575,1078 1575,1052 Z" fill="url(#gBelly)"/><path d="M1479,1398 C1479,1348 1518,1329 1570,1329 C1626,1329 1664,1350 1664,1400 L1664,1434 C1628,1441 1590,1446 1553,1443.5 L1540,1396 L1530,1442 C1505,1440 1484,1430 1479,1415 Z" fill="url(#gFootL)"/><path d="M1540,1396 L1553,1443.5 L1530,1442 Z" fill="#4f8498"/><path d="M1848,1398 C1848,1348 1810,1329 1758,1329 C1702,1329 1664,1350 1664,1400 L1664,1434 C1700,1441 1738,1446 1775,1443.5 L1787.7,1396 L1797,1442 C1822,1440 1843,1430 1848,1415 Z" fill="url(#gFootR)"/><path d="M1787.7,1396 L1775,1443.5 L1797,1442 Z" fill="#4f8498"/><path d="M1512,405 C1503,330 1513,262 1538,218 C1546,204 1551,196 1557,196 C1572,205 1582,240 1590,290 L1600,360 Z" fill="url(#gEar)"/><path d="M1533,318 C1534,287 1543,258 1554.5,251 C1563,256 1568,285 1570,318 Z" fill="url(#gInEar)"/><path d="M1762,392 C1765,320 1775,250 1801,206 C1836,226 1853,280 1853,320 C1853,352 1832,386 1805,410 L1790,420 Z" fill="url(#gEar)"/><path d="M1784,373 C1784,320 1792,275 1806,260 C1822,270 1831,310 1830,335 C1829,356 1806,369 1784,373 Z" fill="url(#gInEar)"/><path d="M1662,360 C1730,360 1785,380 1805,406 C1825,440 1840,490 1846,560 C1848,590 1842,615 1832,633 C1820,652 1805,665 1790,672 L1760,702 L1565,702 L1541,672 C1520,660 1503,645 1490,617 C1484,595 1485,575 1488,560 C1492,500 1505,450 1524.5,411.5 C1550,380 1600,360 1662,360 Z" fill="url(#gHead)"/><path d="M1488.6,664.2 C1516.6,662.7 1547.6,670.4 1579.5,689 L1579.5,706 C1545,699 1515,702 1493.3,709.3 C1510,700 1525,695 1536.8,689 C1525,682 1505,672 1488.6,664.2 Z" fill="#fff59c"/><path d="M1493.3,709.3 C1515,702 1545,699 1579.5,705 L1579.5,733 L1562,740 C1550,746 1537,752 1529,760 C1531,750 1536,740 1541.4,728 C1528,724 1510,718 1493.3,709.3 Z" fill="#5fe000"/><path d="M1579.5,720 L1579.5,734 L1563,738 Z" fill="#2a7ff0"/><g transform="translate(3321.2,0) scale(-1,1)"><path d="M1488.6,664.2 C1516.6,662.7 1547.6,670.4 1579.5,689 L1579.5,706 C1545,699 1515,702 1493.3,709.3 C1510,700 1525,695 1536.8,689 C1525,682 1505,672 1488.6,664.2 Z" fill="#fff59c"/><path d="M1493.3,709.3 C1515,702 1545,699 1579.5,705 L1579.5,733 L1562,740 C1550,746 1537,752 1529,760 C1531,750 1536,740 1541.4,728 C1528,724 1510,718 1493.3,709.3 Z" fill="#96f000"/><path d="M1579.5,720 L1579.5,734 L1563,738 Z" fill="#2a7ff0"/></g><path d="M1640,262 C1645,200 1655,150 1671,123 C1685,150 1692,200 1697,258 Z" fill="url(#gHorn)"/><g clip-path="url(#clipHorn)" fill="#f5960f" opacity="0.85"><path d="M1640,178 L1700,145 L1700,156 L1640,196 Z"/><path d="M1640,222 L1700,183 L1700,195 L1640,240 Z"/><path d="M1640,262 L1700,223 L1700,236 L1640,280 Z"/></g><path d="M1520,400 C1580,425 1680,430 1760,395 L1760,410 C1680,445 1580,440 1520,415 Z" fill="#9aa8ae" opacity="0.35" filter="url(#blur3)"/><path d="M1410.6,338.3 C1440,328 1500,305 1545,288 C1590,268 1630,258 1671,257.8 C1640,270 1620,285 1600,300 C1570,325 1530,345 1494.6,351.3 C1465,355 1435,350 1410.6,338.3 Z" fill="url(#gMPink)"/><path d="M1410.6,338.3 C1435,350 1465,355 1494.6,351.3 C1530,345 1570,325 1600,300 C1620,285 1640,270 1671,257.8 C1690,255 1710,256 1726.4,257.8 C1710,265 1700,278 1695.7,287.4 C1685,310 1675,325 1667,334.7 C1655,352 1640,362 1627,367.8 C1600,380 1580,385 1565.6,386.8 L1459,397.4 L1539.6,372.6 C1510,374 1480,370 1447,360.7 C1430,355 1418,346 1410.6,338.3 Z" fill="url(#gMOr)"/><path d="M1726.4,257.8 C1745,260 1760,265 1771,274 C1755,290 1745,305 1731,327.6 C1720,345 1712,360 1702.8,370 C1690,385 1675,395 1660,401 C1630,412 1600,420 1580,422 L1627,392.7 C1600,402 1570,408 1565.6,409 C1530,410 1510,408 1494.6,405.7 C1480,403 1468,400 1459,397.4 L1565.6,386.8 C1580,385 1600,380 1627,367.8 C1640,362 1655,352 1667,334.7 C1675,325 1685,310 1695.7,287.4 C1700,278 1710,265 1726.4,257.8 Z" fill="url(#gMGr)"/><path d="M1771,274 C1768,300 1765,340 1762,370 C1752,385 1740,393 1731,398.6 C1710,410 1685,418 1660,420 C1630,423 1600,424 1580,422 C1600,420 1630,412 1660,401 C1675,395 1690,385 1702.8,370 C1712,360 1720,345 1731,327.6 C1745,305 1755,290 1771,274 Z" fill="url(#gMBl)"/><path d="M1719,408 C1733,394 1752,392 1766,404 L1764,411 C1750,402 1736,403 1722,413 Z" fill="#6a1a32"/><ellipse cx="1522" cy="568" rx="48" ry="42" fill="url(#gBlush)"/><ellipse cx="1808" cy="568" rx="48" ry="42" fill="url(#gBlush)"/><g clip-path="url(#clipEye)"><ellipse cx="1593" cy="493.5" rx="65.5" ry="69" fill="#0a0a0a"/><ellipse cx="1593" cy="495" rx="62.3" ry="65" fill="url(#gEyeW)"/></g><circle cx="1606" cy="489.5" r="34.5" fill="#e95b82" stroke="#8c1535" stroke-width="2.6"/><circle cx="1606" cy="489.5" r="26" fill="#000" stroke="#a01a40" stroke-width="1.2"/><path d="M1590,502 C1598,498 1614,498 1622,502 C1616,512 1596,512 1590,502 Z" fill="#3b3a5e"/><circle cx="1626.8" cy="466" r="9" fill="#ffffff" opacity="0.72"/><g clip-path="url(#clipEye)"><ellipse cx="1737" cy="493.5" rx="65.5" ry="69" fill="#0a0a0a"/><ellipse cx="1737" cy="495" rx="62.3" ry="65" fill="url(#gEyeW)"/></g><circle cx="1725.6" cy="489.5" r="34.5" fill="#e95b82" stroke="#8c1535" stroke-width="2.6"/><circle cx="1725.6" cy="489.5" r="26" fill="#000" stroke="#a01a40" stroke-width="1.2"/><path d="M1709.6,502 C1717.6,498 1733.6,498 1741.6,502 C1735.6,512 1715.6,512 1709.6,502 Z" fill="#3b3a5e"/><circle cx="1751.8" cy="466" r="9" fill="#ffffff" opacity="0.72"/><path d="M1541,538.5 L1600,538.5 M1729,538.5 L1788,538.5" stroke="#2a2a2a" stroke-width="2.2"/><ellipse cx="1665" cy="566" rx="78" ry="45" fill="#ffb6cd"/><ellipse cx="1662.6" cy="617" rx="127.5" ry="100" fill="url(#gMuz)"/><path d="M1595,561 C1595,536 1614,524 1627,524 C1640,524 1650,531 1656.5,541" fill="none" stroke="#e27b9c" stroke-width="2.2"/><path d="M1673.5,541 C1680,531 1690,524 1701,524 C1716,524 1736,536 1737,561" fill="none" stroke="#e27b9c" stroke-width="2.2"/><path d="M1614,552 C1621,543 1636,542 1646,551 C1648,558 1647,566 1646,569 C1634,567 1620,561 1614,552 Z" fill="#7b3551"/><path d="M1716,552 C1709,543 1694,542 1684,551 C1682,558 1683,566 1684,569 C1696,567 1710,561 1716,552 Z" fill="#7b3551"/><path d="M1602,647 C1640,640 1688,640 1728,647 C1722,664 1702,689 1665,689 C1628,689 1608,664 1602,647 Z" fill="url(#gMouth)" stroke="#2d2d2d" stroke-width="4.6" stroke-linejoin="round"/><path d="M1609,648.5 C1645,643.5 1686,643.5 1721,648.5 C1700,654 1630,654 1609,648.5 Z" fill="#ffffff"/><path d="M1632,683 C1648,672 1682,672 1698,683 C1688,688 1642,688 1632,683 Z" fill="#f86a6a"/><path d="M1634,680 C1650,669 1680,669 1696,680" fill="none" stroke="#f79a9a" stroke-width="1.2"/><path transform="translate(1518,551) rotate(-12)" d="M0,12.60 C-2.10,10.50 -14.00,2.80 -14.00,-4.90 C-14.00,-11.20 -8.40,-14.00 -7.00,-14.00 C-2.80,-14.00 0,-10.50 0,-7.70 C0,-10.50 2.80,-14.00 7.00,-14.00 C8.40,-14.00 14.00,-11.20 14.00,-4.90 C14.00,2.80 2.10,10.50 0,12.60 Z" fill="#ff5d93" opacity="1"/><path transform="translate(1542.5,562) rotate(10)" d="M0,7.65 C-1.27,6.38 -8.50,1.70 -8.50,-2.97 C-8.50,-6.80 -5.10,-8.50 -4.25,-8.50 C-1.70,-8.50 0,-6.38 0,-4.68 C0,-6.38 1.70,-8.50 4.25,-8.50 C5.10,-8.50 8.50,-6.80 8.50,-2.97 C8.50,1.70 1.27,6.38 0,7.65 Z" fill="#ffa3c3" opacity="0.9"/><path transform="translate(1507.5,577.5) rotate(-5)" d="M0,6.30 C-1.05,5.25 -7.00,1.40 -7.00,-2.45 C-7.00,-5.60 -4.20,-7.00 -3.50,-7.00 C-1.40,-7.00 0,-5.25 0,-3.85 C0,-5.25 1.40,-7.00 3.50,-7.00 C4.20,-7.00 7.00,-5.60 7.00,-2.45 C7.00,1.40 1.05,5.25 0,6.30 Z" fill="#ff88b0" opacity="0.9"/><path transform="translate(1812.5,551) rotate(12)" d="M0,12.60 C-2.10,10.50 -14.00,2.80 -14.00,-4.90 C-14.00,-11.20 -8.40,-14.00 -7.00,-14.00 C-2.80,-14.00 0,-10.50 0,-7.70 C0,-10.50 2.80,-14.00 7.00,-14.00 C8.40,-14.00 14.00,-11.20 14.00,-4.90 C14.00,2.80 2.10,10.50 0,12.60 Z" fill="#ff5d93" opacity="1"/><path transform="translate(1787.7,562) rotate(-10)" d="M0,7.65 C-1.27,6.38 -8.50,1.70 -8.50,-2.97 C-8.50,-6.80 -5.10,-8.50 -4.25,-8.50 C-1.70,-8.50 0,-6.38 0,-4.68 C0,-6.38 1.70,-8.50 4.25,-8.50 C5.10,-8.50 8.50,-6.80 8.50,-2.97 C8.50,1.70 1.27,6.38 0,7.65 Z" fill="#ffa3c3" opacity="0.9"/><path transform="translate(1823,577.5) rotate(5)" d="M0,6.30 C-1.05,5.25 -7.00,1.40 -7.00,-2.45 C-7.00,-5.60 -4.20,-7.00 -3.50,-7.00 C-1.40,-7.00 0,-5.25 0,-3.85 C0,-5.25 1.40,-7.00 3.50,-7.00 C4.20,-7.00 7.00,-5.60 7.00,-2.45 C7.00,1.40 1.05,5.25 0,6.30 Z" fill="#ff88b0" opacity="0.9"/><circle cx="1619" cy="771.2" r="10" fill="none" stroke="#8a8a2a" stroke-width="3"/><circle cx="1619" cy="771.2" r="5.5" fill="#e6e000"/><text x="1619" y="799" text-anchor="middle" font-family="Liberation Sans" font-size="11" font-weight="700" fill="#d6cc00">origin</text></svg>
<svg style="position:absolute;left:986.50px;top:1507.00px" width="10.00" height="16.00" viewBox="0 0 10 16"><path d="M2 2 L7 8 L2 14" fill="none" stroke="#c8c8c8" stroke-width="2"/></svg>
<svg style="position:absolute;left:1007.00px;top:1505.00px" width="20.00" height="20.00" viewBox="0 0 20 20"><path d="M10 0.8 L19.5 19.2 H0.5 Z" fill="#c8c8c8"/><path d="M10 6 V13" stroke="#232323" stroke-width="2.2"/><circle cx="10" cy="16" r="1.3" fill="#232323"/></svg>
<div style="position:absolute;left:1041.50px;top:1501.00px;width:1.00px;height:27.00px;background:#3a3a3a;"></div>
<svg style="position:absolute;left:1057.00px;top:1503.00px" width="25.00" height="25.00" viewBox="0 0 25 25"><path d="M10.5 1.5 L22 5.5 L23.5 17 L12 24 L1.5 13 Z M10.5 1.5 L15 13 L12 24 M1.5 13 H15 L22 5.5 M15 13 L23.5 17" fill="none" stroke="#c8c8c8" stroke-width="1.5" stroke-linejoin="round"/></svg>
<svg style="position:absolute;left:1093.00px;top:1503.00px" width="25.00" height="25.00" viewBox="0 0 25 25"><path d="M10.5 1.5 L22 5.5 L23.5 17 L12 24 L1.5 13 Z" fill="none" stroke="#2f8ef0" stroke-width="2.2" stroke-linejoin="round"/></svg>
<svg style="position:absolute;left:1503.50px;top:1503.00px" width="20.00" height="28.00" viewBox="0 0 20 28"><path d="M0.5 0 L19 17 L10 17 L0.5 27 Z" fill="#3a98f0"/></svg>
<svg style="position:absolute;left:1538.00px;top:1502.00px" width="26.00" height="28.00" viewBox="0 0 26 28"><g stroke="#c4c4c4" stroke-width="3.4" stroke-linecap="round"><path d="M9.5 13 L8 4.5"/><path d="M13 12 V2.5"/><path d="M16.5 12.5 L17.8 4"/><path d="M19.8 14 L21.6 7.5"/><path d="M7.5 18.5 L2.5 13.5"/></g><ellipse cx="14" cy="19" rx="7.6" ry="8" fill="#c4c4c4"/></svg>
<svg style="position:absolute;left:1576.00px;top:1503.00px" width="26.00" height="26.00" viewBox="0 0 26 26"><circle cx="10" cy="10" r="8" fill="none" stroke="#c4c4c4" stroke-width="2.2"/><path d="M16 16 L24 24" stroke="#c4c4c4" stroke-width="3" stroke-linecap="round"/></svg>
<div style="position:absolute;left:1617.50px;top:1502.00px;width:1.00px;height:27.00px;background:#3a3a3a;"></div>
<svg style="position:absolute;left:1633.50px;top:1503.00px" width="25.00" height="25.00" viewBox="0 0 25 25"><circle cx="12.2" cy="12.2" r="10.6" fill="none" stroke="#c4c4c4" stroke-width="2.2"/><circle cx="12.2" cy="12.2" r="5" fill="#c4c4c4"/></svg>
<svg style="position:absolute;left:1673.00px;top:1504.00px" width="24.00" height="24.00" viewBox="0 0 24 24"><path d="M1.5 22.5 L9 15 M15 9 L22.5 1.5" stroke="#c4c4c4" stroke-width="2.2" stroke-linecap="round"/><circle cx="12" cy="12" r="3.6" fill="none" stroke="#c4c4c4" stroke-width="2.4"/></svg>
<svg style="position:absolute;left:1708.00px;top:1503.00px" width="24.00" height="25.00" viewBox="0 0 24 25"><path d="M13 1 L23 11 L20.5 12.5 L17.5 11 L13 15.5 L13.5 19.5 L11.5 21 L3 12.5 L4.5 10.5 L8.5 11 L13 6.5 L11.5 3.5 Z" fill="#c4c4c4"/><path d="M7 17 L1.5 23" stroke="#c4c4c4" stroke-width="2.2" stroke-linecap="round"/></svg>
<svg style="position:absolute;left:1749.00px;top:1502.00px" width="26.00" height="26.00" viewBox="0 0 26 26"><circle cx="13" cy="13" r="6" fill="#c4c4c4"/><path d="M13 0.5 L17.5 5 H8.5 Z M13 25.5 L17.5 21 H8.5 Z M0.5 13 L5 8.5 V17.5 Z M25.5 13 L21 8.5 V17.5 Z" fill="#c4c4c4"/></svg>
<svg style="position:absolute;left:1788.00px;top:1503.00px" width="27.00" height="27.00" viewBox="0 0 27 27"><path d="M6 20 Q17 14 25 1.5" fill="none" stroke="#c4c4c4" stroke-width="2"/><circle cx="6" cy="20" r="5.3" fill="#c4c4c4"/></svg>
<svg style="position:absolute;left:2199.50px;top:1503.00px" width="26.00" height="23.00" viewBox="0 0 26 23"><rect x="0.5" y="0.5" width="25" height="22" fill="#d0d0d0"/><rect x="2.0" y="2.2" width="4.4" height="4.5" fill="#707070"/><rect x="2.0" y="11.2" width="4.4" height="4.5" fill="#707070"/><rect x="6.4" y="6.7" width="4.4" height="4.5" fill="#707070"/><rect x="6.4" y="15.7" width="4.4" height="4.5" fill="#707070"/><rect x="10.8" y="2.2" width="4.4" height="4.5" fill="#707070"/><rect x="10.8" y="11.2" width="4.4" height="4.5" fill="#707070"/><rect x="15.2" y="6.7" width="4.4" height="4.5" fill="#707070"/><rect x="15.2" y="15.7" width="4.4" height="4.5" fill="#707070"/><rect x="19.6" y="2.2" width="4.4" height="4.5" fill="#707070"/><rect x="19.6" y="11.2" width="4.4" height="4.5" fill="#707070"/></svg>
<div style="position:absolute;left:2241.00px;top:1499.00px;width:56.00px;height:30.00px;background:#202020;border-radius:3px;"></div>
<div class="t" style="left:2253.32px;top:1507.59px;font-size:17.73px;line-height:17.73px;color:#3f9cf2;transform:scaleX(0.9453)">110%</div>
<div style="position:absolute;left:2300.00px;top:1499.00px;width:29.00px;height:30.50px;background:#1a1a1a;box-sizing:border-box;border:1px solid #2e2e2e;border-radius:4px;"></div>
<svg style="position:absolute;left:2307.00px;top:1509.75px" width="15.00" height="9.50" viewBox="0 0 15.0 9.5"><path d="M2 2 L7.5 6.5 L13.0 2" fill="none" stroke="#d0d0d0" stroke-width="2"/></svg>
<div style="position:absolute;left:2347.00px;top:62.00px;width:6.00px;height:1482.00px;background:#141414;"></div>
<div style="position:absolute;left:2353.00px;top:62.00px;width:499.00px;height:1479.00px;background:#232323;"></div>
<div class="t" style="left:2369.17px;top:74.81px;font-size:18.90px;line-height:18.90px;color:#d4d4d4;transform:scaleX(0.8591)">Eigenschaften</div>
<svg style="position:absolute;left:2486.00px;top:79.50px" width="12.50" height="11.00" viewBox="0 0 12.5 11"><rect x="0" y="0.60" width="12.5" height="1.8" fill="#c8c8c8"/><rect x="0" y="4.60" width="12.5" height="1.8" fill="#c8c8c8"/><rect x="0" y="8.60" width="12.5" height="1.8" fill="#c8c8c8"/></svg>
<svg style="position:absolute;left:2368.50px;top:119.50px" width="13.00" height="18.50" viewBox="0 0 13 18.5"><circle cx="6.5" cy="3" r="2.8" fill="#bdbdbd"/><path d="M6.5 7.5 L13 18.5 L0 18.5 Z" fill="#bdbdbd"/></svg>
<div class="t" style="left:2397.89px;top:119.64px;font-size:21.22px;line-height:21.22px;color:#f2f2f2;transform:scaleX(0.8385)">Sternenstaub</div>
<div style="position:absolute;left:2362.70px;top:150.60px;width:477.30px;height:27.40px;background:#161616;box-sizing:border-box;border:1px solid #2b2b2b;border-radius:4px;"></div>
<svg style="position:absolute;left:2370.70px;top:155.30px" width="18.00" height="18.00" viewBox="0 0 18 18"><circle cx="11" cy="7" r="5.3" fill="none" stroke="#c8c8c8" stroke-width="2"/><path d="M7.2 10.8 L2 16" stroke="#c8c8c8" stroke-width="2.6" stroke-linecap="round"/></svg>
<div style="position:absolute;left:2354.00px;top:182.80px;width:495.00px;height:28.20px;background:#393939;"></div>
<div style="position:absolute;left:2354.00px;top:182.80px;width:495.00px;height:1.50px;background:#444444;"></div>
<svg style="position:absolute;left:2359.50px;top:192.15px" width="15.00" height="9.50" viewBox="0 0 15.0 9.5"><path d="M2 2 L7.5 6.5 L13.0 2" fill="none" stroke="#c8c8c8" stroke-width="1.8"/></svg>
<div class="t" style="left:2382.57px;top:188.90px;font-size:18.31px;line-height:18.31px;color:#ececec;transform:scaleX(0.9500)">Marionette</div>
<div class="t" style="left:2409.57px;top:227.10px;font-size:18.31px;line-height:18.31px;color:#3f9cf2;transform:scaleX(0.8895)">C:\User...dia\Gathered Media\Unicorn Puppet.psd</div>
<div class="t" style="left:2409.97px;top:261.40px;font-size:18.31px;line-height:18.31px;color:#ababab;transform:scaleX(0.9055)">Autom. mit Grafik synchr.</div>
<div style="position:absolute;left:2753.50px;top:258.00px;width:21.50px;height:21.00px;background:#b0b0b0;border-radius:3px;"></div>
<svg style="position:absolute;left:2753.50px;top:258.00px" width="21.50" height="21.00" viewBox="0 0 21.5 21"><path d="M4.5 10.5 L9 15 L17 6" fill="none" stroke="#262626" stroke-width="2.6"/></svg>
<div style="position:absolute;left:2354.00px;top:293.00px;width:495.00px;height:29.00px;background:#393939;"></div>
<div style="position:absolute;left:2354.00px;top:293.00px;width:495.00px;height:1.50px;background:#444444;"></div>
<svg style="position:absolute;left:2359.50px;top:302.75px" width="15.00" height="9.50" viewBox="0 0 15.0 9.5"><path d="M2 2 L7.5 6.5 L13.0 2" fill="none" stroke="#c8c8c8" stroke-width="1.8"/></svg>
<div class="t" style="left:2382.60px;top:298.90px;font-size:18.31px;line-height:18.31px;color:#ececec;transform:scaleX(0.9350)">Marionettengitter</div>
<div class="t" style="left:2410.53px;top:338.40px;font-size:18.31px;line-height:18.31px;color:#ababab;transform:scaleX(0.9461)">Gitterform</div>
<div style="position:absolute;left:2571.00px;top:331.00px;width:203.00px;height:30.00px;background:#1c1c1c;box-sizing:border-box;border:1px solid #2f2f2f;border-radius:4px;"></div>
<div class="t" style="left:2580.97px;top:338.40px;font-size:18.31px;line-height:18.31px;color:#e4e4e4;transform:scaleX(0.9155)">Autom. (Vorversion)</div>
<svg style="position:absolute;left:2753.00px;top:341.25px" width="15.00" height="9.50" viewBox="0 0 15.0 9.5"><path d="M2 2 L7.5 6.5 L13.0 2" fill="none" stroke="#d8d8d8" stroke-width="2"/></svg>
<div class="t" style="left:2410.57px;top:371.60px;font-size:18.31px;line-height:18.31px;color:#575757;transform:scaleX(0.8978)">Gitterinsel-Verbindungsbreite</div>
<div class="t" style="left:2761.18px;top:371.60px;font-size:18.31px;line-height:18.31px;color:#575757;transform:scaleX(1.1423)">0</div>
<div class="t" style="left:2411.15px;top:404.60px;font-size:18.31px;line-height:18.31px;color:#575757;transform:scaleX(0.8905)">Jede Insel verbinden mit</div>
<div style="position:absolute;left:2654.00px;top:396.00px;width:120.00px;height:30.50px;background:#272727;border-radius:4px;"></div>
<div class="t" style="left:2663.45px;top:402.80px;font-size:18.31px;line-height:18.31px;color:#575757;transform:scaleX(0.8982)">Nächster</div>
<svg style="position:absolute;left:2753.00px;top:406.25px" width="15.00" height="9.50" viewBox="0 0 15.0 9.5"><path d="M2 2 L7.5 6.5 L13.0 2" fill="none" stroke="#4e4e4e" stroke-width="2"/></svg>
<div class="t" style="left:2410.56px;top:436.90px;font-size:18.31px;line-height:18.31px;color:#ababab;transform:scaleX(0.9134)">Gitterausweitung</div>
<div class="t" style="left:2761.18px;top:436.90px;font-size:18.31px;line-height:18.31px;color:#3f9cf2;transform:scaleX(1.1423)">0</div>
<div style="position:absolute;left:2354.00px;top:468.00px;width:495.00px;height:29.60px;background:#393939;"></div>
<div style="position:absolute;left:2354.00px;top:468.00px;width:495.00px;height:1.50px;background:#444444;"></div>
<svg style="position:absolute;left:2359.50px;top:478.05px" width="15.00" height="9.50" viewBox="0 0 15.0 9.5"><path d="M2 2 L7.5 6.5 L13.0 2" fill="none" stroke="#c8c8c8" stroke-width="1.8"/></svg>
<div class="t" style="left:2383.93px;top:473.90px;font-size:18.31px;line-height:18.31px;color:#ececec;transform:scaleX(0.9115)">Verhalten</div>
<svg style="position:absolute;left:2759.50px;top:476.00px" width="15.00" height="15.00" viewBox="0 0 15 15"><path d="M7.5 0 V15 M0 7.5 H15" stroke="#d8d8d8" stroke-width="2.6"/></svg>
<svg style="position:absolute;left:2359.25px;top:517.10px" width="9.50" height="15.00" viewBox="0 0 9.5 15.0"><path d="M2 2 L6.5 7.5 L2 13.0" fill="none" stroke="#c8c8c8" stroke-width="1.8"/></svg>
<div class="t" style="left:2383.97px;top:515.80px;font-size:18.31px;line-height:18.31px;color:#e4e4e4;transform:scaleX(0.8814)">Auslöser</div>
<svg style="position:absolute;left:2761.00px;top:518.10px" width="12.50" height="12.50" viewBox="0 0 12.5 12.5"><rect x="0" y="0.60" width="12.5" height="1.8" fill="#d0d0d0"/><rect x="0" y="5.35" width="12.5" height="1.8" fill="#d0d0d0"/><rect x="0" y="10.10" width="12.5" height="1.8" fill="#d0d0d0"/></svg>
<div style="position:absolute;left:2355.00px;top:550.20px;width:420.00px;height:2.00px;background:#1a1a1a;"></div>
<svg style="position:absolute;left:2359.25px;top:571.20px" width="9.50" height="15.00" viewBox="0 0 9.5 15.0"><path d="M2 2 L6.5 7.5 L2 13.0" fill="none" stroke="#c8c8c8" stroke-width="1.8"/></svg>
<div class="t" style="left:2382.59px;top:569.90px;font-size:18.31px;line-height:18.31px;color:#e4e4e4;transform:scaleX(0.9354)">Blickrichtung</div>
<svg style="position:absolute;left:2761.00px;top:572.20px" width="12.50" height="12.50" viewBox="0 0 12.5 12.5"><rect x="0" y="0.60" width="12.5" height="1.8" fill="#d0d0d0"/><rect x="0" y="5.35" width="12.5" height="1.8" fill="#d0d0d0"/><rect x="0" y="10.10" width="12.5" height="1.8" fill="#d0d0d0"/></svg>
<div style="position:absolute;left:2355.00px;top:604.30px;width:420.00px;height:2.00px;background:#1a1a1a;"></div>
<svg style="position:absolute;left:2359.25px;top:625.30px" width="9.50" height="15.00" viewBox="0 0 9.5 15.0"><path d="M2 2 L6.5 7.5 L2 13.0" fill="none" stroke="#c8c8c8" stroke-width="1.8"/></svg>
<div class="t" style="left:2382.66px;top:624.00px;font-size:18.31px;line-height:18.31px;color:#e4e4e4;transform:scaleX(0.8934)">Dragger</div>
<svg style="position:absolute;left:2761.00px;top:626.30px" width="12.50" height="12.50" viewBox="0 0 12.5 12.5"><rect x="0" y="0.60" width="12.5" height="1.8" fill="#d0d0d0"/><rect x="0" y="5.35" width="12.5" height="1.8" fill="#d0d0d0"/><rect x="0" y="10.10" width="12.5" height="1.8" fill="#d0d0d0"/></svg>
<div style="position:absolute;left:2355.00px;top:658.40px;width:420.00px;height:2.00px;background:#1a1a1a;"></div>
<svg style="position:absolute;left:2359.25px;top:679.40px" width="9.50" height="15.00" viewBox="0 0 9.5 15.0"><path d="M2 2 L6.5 7.5 L2 13.0" fill="none" stroke="#c8c8c8" stroke-width="1.8"/></svg>
<div class="t" style="left:2383.19px;top:678.10px;font-size:18.31px;line-height:18.31px;color:#e4e4e4;transform:scaleX(0.8848)">Gesicht</div>
<svg style="position:absolute;left:2761.00px;top:680.40px" width="12.50" height="12.50" viewBox="0 0 12.5 12.5"><rect x="0" y="0.60" width="12.5" height="1.8" fill="#d0d0d0"/><rect x="0" y="5.35" width="12.5" height="1.8" fill="#d0d0d0"/><rect x="0" y="10.10" width="12.5" height="1.8" fill="#d0d0d0"/></svg>
<div style="position:absolute;left:2355.00px;top:712.50px;width:420.00px;height:2.00px;background:#1a1a1a;"></div>
<svg style="position:absolute;left:2359.25px;top:733.50px" width="9.50" height="15.00" viewBox="0 0 9.5 15.0"><path d="M2 2 L6.5 7.5 L2 13.0" fill="none" stroke="#c8c8c8" stroke-width="1.8"/></svg>
<div class="t" style="left:2382.63px;top:732.20px;font-size:18.31px;line-height:18.31px;color:#e4e4e4;transform:scaleX(0.9125)">Handle-Fixierung</div>
<svg style="position:absolute;left:2761.00px;top:734.50px" width="12.50" height="12.50" viewBox="0 0 12.5 12.5"><rect x="0" y="0.60" width="12.5" height="1.8" fill="#d0d0d0"/><rect x="0" y="5.35" width="12.5" height="1.8" fill="#d0d0d0"/><rect x="0" y="10.10" width="12.5" height="1.8" fill="#d0d0d0"/></svg>
<div style="position:absolute;left:2355.00px;top:766.60px;width:420.00px;height:2.00px;background:#1a1a1a;"></div>
<svg style="position:absolute;left:2359.25px;top:787.60px" width="9.50" height="15.00" viewBox="0 0 9.5 15.0"><path d="M2 2 L6.5 7.5 L2 13.0" fill="none" stroke="#c8c8c8" stroke-width="1.8"/></svg>
<div class="t" style="left:2382.60px;top:786.30px;font-size:18.31px;line-height:18.31px;color:#e4e4e4;transform:scaleX(0.9349)">Körper</div>
<svg style="position:absolute;left:2761.00px;top:788.60px" width="12.50" height="12.50" viewBox="0 0 12.5 12.5"><rect x="0" y="0.60" width="12.5" height="1.8" fill="#d0d0d0"/><rect x="0" y="5.35" width="12.5" height="1.8" fill="#d0d0d0"/><rect x="0" y="10.10" width="12.5" height="1.8" fill="#d0d0d0"/></svg>
<div style="position:absolute;left:2355.00px;top:820.70px;width:420.00px;height:2.00px;background:#1a1a1a;"></div>
<svg style="position:absolute;left:2359.25px;top:841.70px" width="9.50" height="15.00" viewBox="0 0 9.5 15.0"><path d="M2 2 L6.5 7.5 L2 13.0" fill="none" stroke="#c8c8c8" stroke-width="1.8"/></svg>
<div class="t" style="left:2382.62px;top:840.40px;font-size:18.31px;line-height:18.31px;color:#e4e4e4;transform:scaleX(0.9189)">Lippensynchronisation</div>
<svg style="position:absolute;left:2761.00px;top:842.70px" width="12.50" height="12.50" viewBox="0 0 12.5 12.5"><rect x="0" y="0.60" width="12.5" height="1.8" fill="#d0d0d0"/><rect x="0" y="5.35" width="12.5" height="1.8" fill="#d0d0d0"/><rect x="0" y="10.10" width="12.5" height="1.8" fill="#d0d0d0"/></svg>
<div style="position:absolute;left:2355.00px;top:874.80px;width:420.00px;height:2.00px;background:#1a1a1a;"></div>
<svg style="position:absolute;left:2359.25px;top:895.80px" width="9.50" height="15.00" viewBox="0 0 9.5 15.0"><path d="M2 2 L6.5 7.5 L2 13.0" fill="none" stroke="#c8c8c8" stroke-width="1.8"/></svg>
<div class="t" style="left:2382.64px;top:894.50px;font-size:18.31px;line-height:18.31px;color:#e4e4e4;transform:scaleX(0.9035)">Physik</div>
<svg style="position:absolute;left:2761.00px;top:896.80px" width="12.50" height="12.50" viewBox="0 0 12.5 12.5"><rect x="0" y="0.60" width="12.5" height="1.8" fill="#d0d0d0"/><rect x="0" y="5.35" width="12.5" height="1.8" fill="#d0d0d0"/><rect x="0" y="10.10" width="12.5" height="1.8" fill="#d0d0d0"/></svg>
<div style="position:absolute;left:2355.00px;top:928.90px;width:420.00px;height:2.00px;background:#1a1a1a;"></div>
<svg style="position:absolute;left:2359.25px;top:949.90px" width="9.50" height="15.00" viewBox="0 0 9.5 15.0"><path d="M2 2 L6.5 7.5 L2 13.0" fill="none" stroke="#c8c8c8" stroke-width="1.8"/></svg>
<div class="t" style="left:2383.63px;top:948.60px;font-size:18.31px;line-height:18.31px;color:#e4e4e4;transform:scaleX(0.8975)">Transformieren</div>
<svg style="position:absolute;left:2761.00px;top:950.90px" width="12.50" height="12.50" viewBox="0 0 12.5 12.5"><rect x="0" y="0.60" width="12.5" height="1.8" fill="#d0d0d0"/><rect x="0" y="5.35" width="12.5" height="1.8" fill="#d0d0d0"/><rect x="0" y="10.10" width="12.5" height="1.8" fill="#d0d0d0"/></svg>
<div style="position:absolute;left:2354.00px;top:977.80px;width:495.00px;height:29.00px;background:#393939;"></div>
<div style="position:absolute;left:2354.00px;top:977.80px;width:495.00px;height:1.50px;background:#444444;"></div>
<svg style="position:absolute;left:2359.50px;top:987.55px" width="15.00" height="9.50" viewBox="0 0 15.0 9.5"><path d="M2 2 L7.5 6.5 L13.0 2" fill="none" stroke="#c8c8c8" stroke-width="1.8"/></svg>
<div class="t" style="left:2383.93px;top:982.40px;font-size:18.31px;line-height:18.31px;color:#ececec;transform:scaleX(0.9084)">Wiederholungen</div>
<div style="position:absolute;left:2355.00px;top:1035.40px;width:495.00px;height:1.00px;background:#1c1c1c;"></div>
<div style="position:absolute;left:2789.00px;top:1006.80px;width:1.00px;height:28.60px;background:#1f1f1f;"></div>
<div class="t" style="left:2416.38px;top:1014.10px;font-size:18.31px;line-height:18.31px;color:#ababab;transform:scaleX(0.8794)">Celebrate</div>
<div class="t" style="left:2792.39px;top:1014.10px;font-size:18.31px;line-height:18.31px;color:#ababab;transform:scaleX(0.8338)">5.5s</div>
<div style="position:absolute;left:2355.00px;top:1065.00px;width:495.00px;height:1.00px;background:#1c1c1c;"></div>
<div style="position:absolute;left:2789.00px;top:1036.40px;width:1.00px;height:28.60px;background:#1f1f1f;"></div>
<div class="t" style="left:2415.78px;top:1043.70px;font-size:18.31px;line-height:18.31px;color:#ababab;transform:scaleX(0.9475)">Point</div>
<div class="t" style="left:2791.61px;top:1043.70px;font-size:18.31px;line-height:18.31px;color:#ababab;transform:scaleX(0.8567)">2.1s</div>
<div style="position:absolute;left:2355.00px;top:1094.60px;width:495.00px;height:1.00px;background:#1c1c1c;"></div>
<div style="position:absolute;left:2789.00px;top:1066.00px;width:1.00px;height:28.60px;background:#1f1f1f;"></div>
<div class="t" style="left:2415.78px;top:1073.30px;font-size:18.31px;line-height:18.31px;color:#ababab;transform:scaleX(0.9475)">Point</div>
<div class="t" style="left:2791.61px;top:1073.30px;font-size:18.31px;line-height:18.31px;color:#ababab;transform:scaleX(0.8567)">2.1s</div>
<div style="position:absolute;left:2355.00px;top:1124.20px;width:495.00px;height:1.00px;background:#1c1c1c;"></div>
<div style="position:absolute;left:2789.00px;top:1095.60px;width:1.00px;height:28.60px;background:#1f1f1f;"></div>
<div class="t" style="left:2417.17px;top:1102.90px;font-size:18.31px;line-height:18.31px;color:#ababab;transform:scaleX(0.8918)">Arms to side</div>
<div class="t" style="left:2791.61px;top:1102.90px;font-size:18.31px;line-height:18.31px;color:#ababab;transform:scaleX(0.8567)">2.1s</div>
<div style="position:absolute;left:2355.00px;top:1153.80px;width:495.00px;height:1.00px;background:#1c1c1c;"></div>
<div style="position:absolute;left:2789.00px;top:1125.20px;width:1.00px;height:28.60px;background:#1f1f1f;"></div>
<div class="t" style="left:2417.13px;top:1132.50px;font-size:18.31px;line-height:18.31px;color:#ababab;transform:scaleX(0.8493)">Wave</div>
<div class="t" style="left:2804.39px;top:1132.50px;font-size:18.31px;line-height:18.31px;color:#ababab;transform:scaleX(0.8730)">3s</div>
<div style="position:absolute;left:2355.00px;top:1200.00px;width:495.00px;height:1.50px;background:#1c1c1c;"></div>
<div style="position:absolute;left:0.00px;top:1542.50px;width:2852.00px;height:1.50px;background:#181818;"></div>
<div style="position:absolute;left:2850.50px;top:62.00px;width:1.50px;height:1482.00px;background:#151515;"></div>
</body></html>
